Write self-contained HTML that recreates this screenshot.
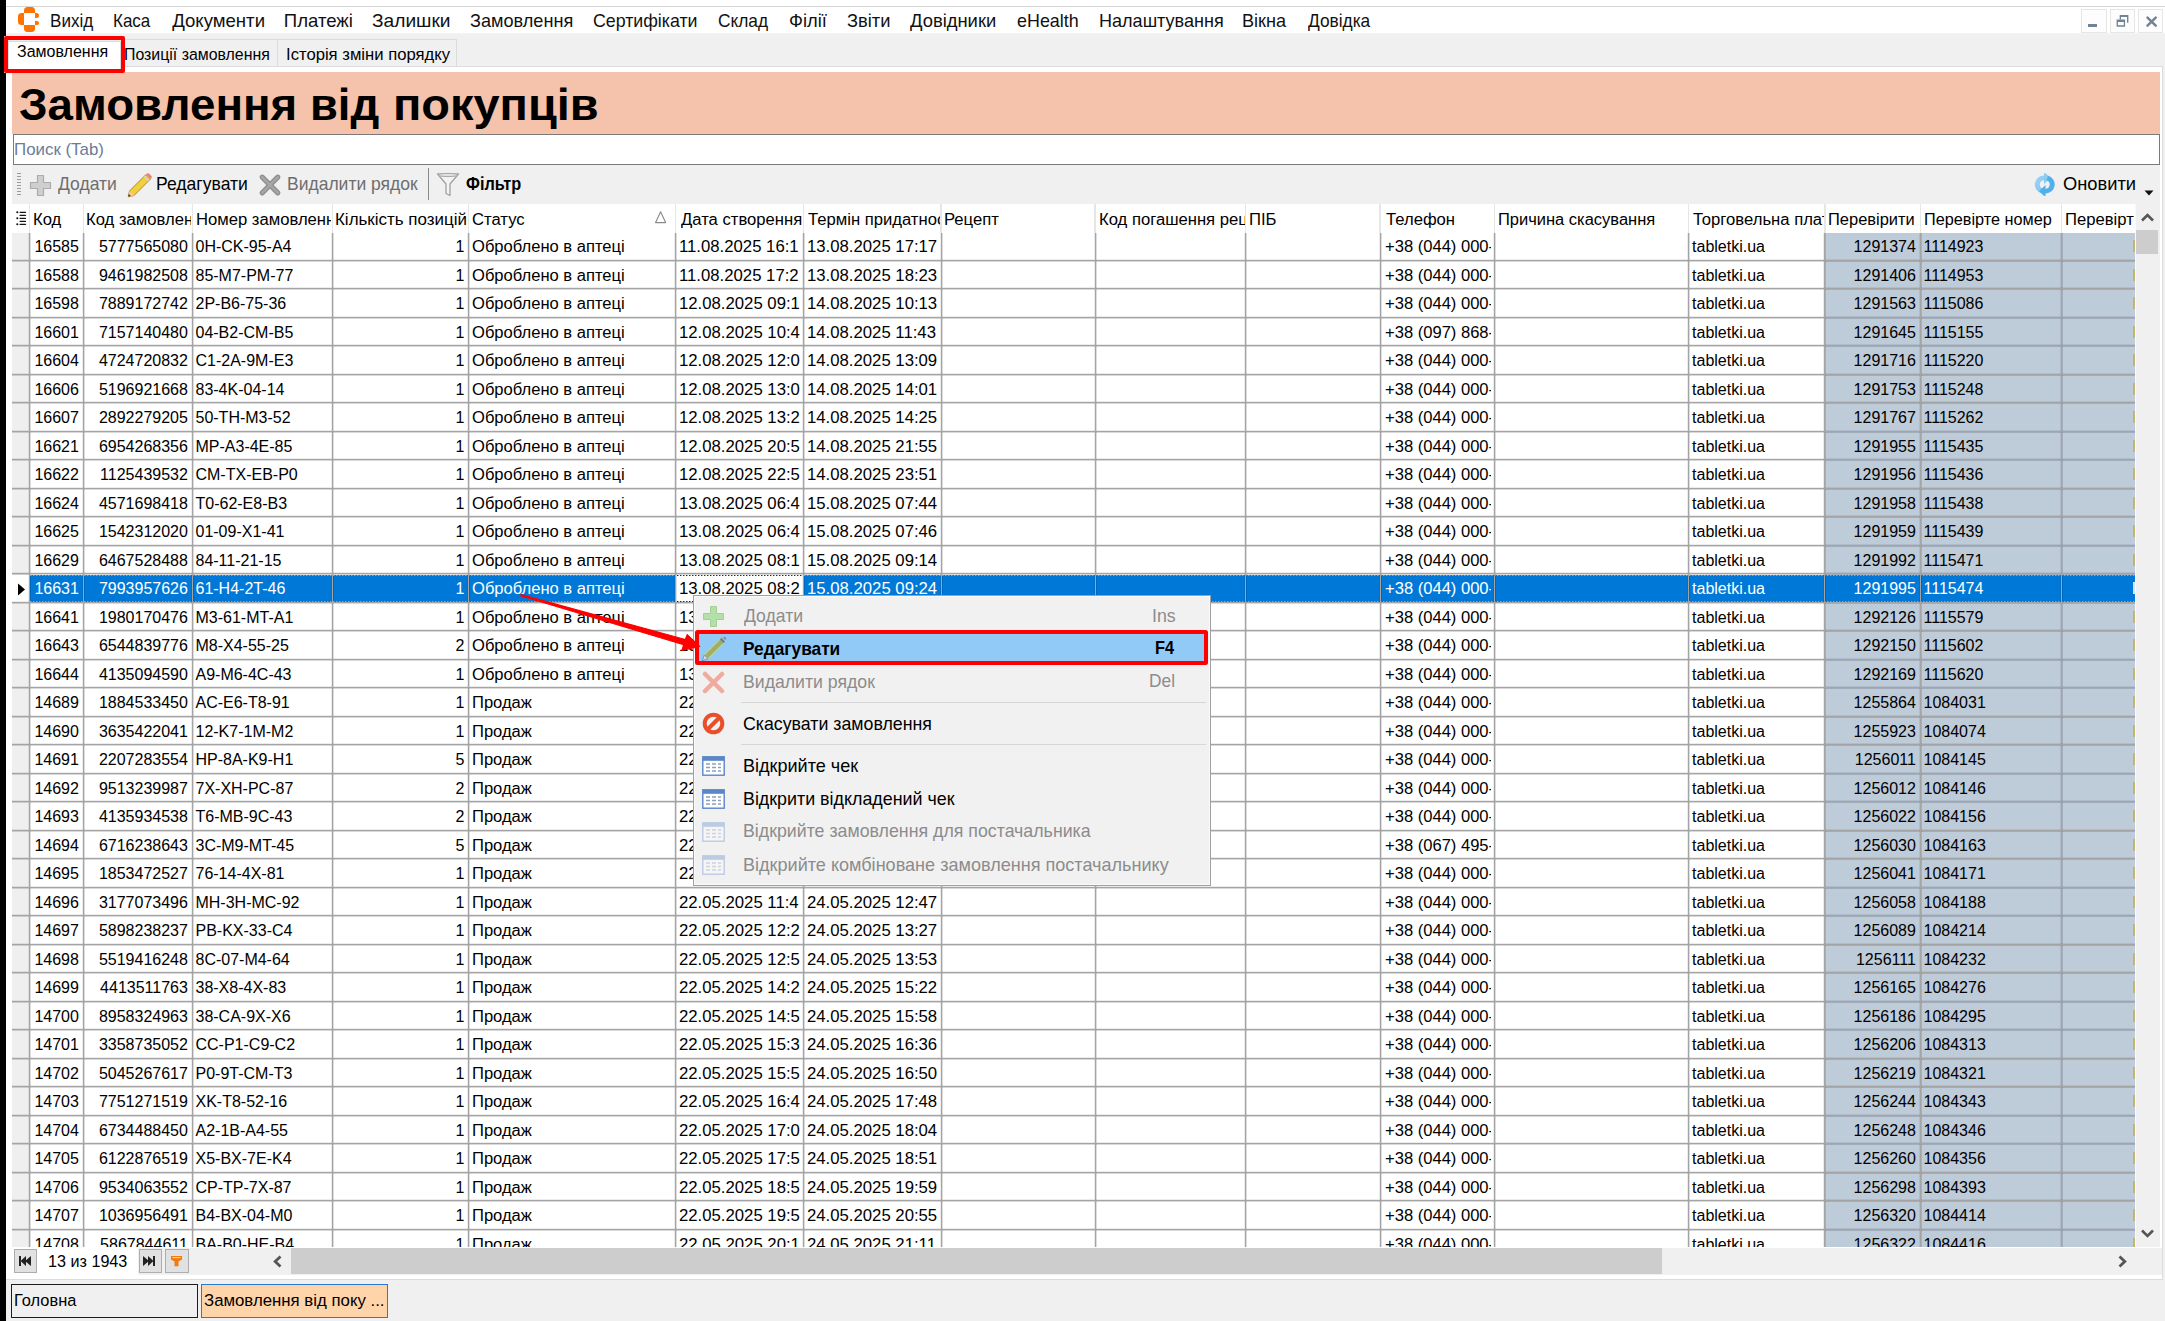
<!DOCTYPE html>
<html><head><meta charset="utf-8"><style>
html,body{margin:0;padding:0;}
body{width:2165px;height:1321px;overflow:hidden;position:relative;background:#f0f0f0;font-family:"Liberation Sans", sans-serif;}
body div, body svg{position:absolute;}
.t{white-space:nowrap;}
</style></head><body>
<div style="left:0;top:0;width:2165px;height:7px;background:#fff"></div>
<div style="left:0.00px;top:6.00px;width:2165.00px;height:1.00px;background:#d6d6d6"></div>
<div style="left:0.00px;top:7.00px;width:2165.00px;height:26.00px;background:#fff"></div>
<div style="left:0.00px;top:33.00px;width:2165.00px;height:2.00px;background:linear-gradient(#f4f4f4,#f0f0f0)"></div>
<div style="left:23.90px;top:7.40px;width:11.50px;height:6.10px;background:#ff7300;border-radius:3.5px 3.5px 0 0"></div>
<div style="left:17.75px;top:13.40px;width:6.25px;height:11.80px;background:#ff7300;border-radius:3.5px 0 0 3.5px"></div>
<div style="left:23.90px;top:25.40px;width:11.50px;height:6.20px;background:#ff7300;border-radius:0 0 3.5px 3.5px"></div>
<div style="left:35.30px;top:13.40px;width:3.80px;height:4.50px;background:#ff7300;border-radius:0 2.5px 2.5px 0"></div>
<div style="left:35.30px;top:21.00px;width:3.80px;height:4.20px;background:#ff7300;border-radius:0 2.5px 2.5px 0"></div>
<div class="t" style="left:50.10px;top:7.84px;height:26.04px;line-height:26.04px;font-size:18.6px;transform:scaleX(0.9177);transform-origin:0 0;color:#111">Вихід</div>
<div class="t" style="left:113.31px;top:7.84px;height:26.04px;line-height:26.04px;font-size:18.6px;transform:scaleX(0.9139);transform-origin:0 0;color:#111">Каса</div>
<div class="t" style="left:172.16px;top:7.84px;height:26.04px;line-height:26.04px;font-size:18.6px;color:#111">Документи</div>
<div class="t" style="left:283.79px;top:7.84px;height:26.04px;line-height:26.04px;font-size:18.6px;color:#111">Платежі</div>
<div class="t" style="left:372.37px;top:7.84px;height:26.04px;line-height:26.04px;font-size:18.6px;transform:scaleX(1.0303);transform-origin:0 0;color:#111">Залишки</div>
<div class="t" style="left:470.01px;top:7.84px;height:26.04px;line-height:26.04px;font-size:18.6px;transform:scaleX(0.9746);transform-origin:0 0;color:#111">Замовлення</div>
<div class="t" style="left:593.40px;top:7.84px;height:26.04px;line-height:26.04px;font-size:18.6px;transform:scaleX(0.9554);transform-origin:0 0;color:#111">Сертифікати</div>
<div class="t" style="left:718.42px;top:7.84px;height:26.04px;line-height:26.04px;font-size:18.6px;transform:scaleX(0.9306);transform-origin:0 0;color:#111">Склад</div>
<div class="t" style="left:788.74px;top:7.84px;height:26.04px;line-height:26.04px;font-size:18.6px;transform:scaleX(0.9849);transform-origin:0 0;color:#111">Філії</div>
<div class="t" style="left:846.90px;top:7.84px;height:26.04px;line-height:26.04px;font-size:18.6px;transform:scaleX(0.9824);transform-origin:0 0;color:#111">Звіти</div>
<div class="t" style="left:910.37px;top:7.84px;height:26.04px;line-height:26.04px;font-size:18.6px;transform:scaleX(0.9889);transform-origin:0 0;color:#111">Довідники</div>
<div class="t" style="left:1016.84px;top:7.84px;height:26.04px;line-height:26.04px;font-size:18.6px;transform:scaleX(0.9631);transform-origin:0 0;color:#111">eHealth</div>
<div class="t" style="left:1098.52px;top:7.84px;height:26.04px;line-height:26.04px;font-size:18.6px;transform:scaleX(0.9706);transform-origin:0 0;color:#111">Налаштування</div>
<div class="t" style="left:1242.21px;top:7.84px;height:26.04px;line-height:26.04px;font-size:18.6px;transform:scaleX(0.9737);transform-origin:0 0;color:#111">Вікна</div>
<div class="t" style="left:1307.77px;top:7.84px;height:26.04px;line-height:26.04px;font-size:18.6px;transform:scaleX(0.9304);transform-origin:0 0;color:#111">Довідка</div>
<div style="left:2081.20px;top:8.70px;width:25.40px;height:24.50px;border:1px solid #e6e6e6;box-sizing:border-box;background:#fdfdfd"></div>
<div style="left:2109.50px;top:8.70px;width:25.80px;height:24.50px;border:1px solid #e6e6e6;box-sizing:border-box;background:#fdfdfd"></div>
<div style="left:2138.40px;top:8.70px;width:24.90px;height:24.50px;border:1px solid #e6e6e6;box-sizing:border-box;background:#fdfdfd"></div>
<div style="left:2088.00px;top:24.10px;width:8.80px;height:2.50px;background:#728396"></div>
<svg style="left:2116px;top:14px" width="14" height="14" viewBox="0 0 14 14"><path d="M3.7 1 H12.4 V8.7 H11 V3 H5 V5.5 H3.7 Z" fill="#728396"/><path d="M0.6 5.5 H9.1 V12.8 H0.6 Z M1.9 8 V11.3 H7.8 V8 Z" fill="#728396" fill-rule="evenodd"/></svg>
<svg style="left:2145px;top:15px" width="13" height="13" viewBox="0 0 13 13"><path d="M2.5 2.6 L10.7 10.6 M10.7 2.6 L2.5 10.6" stroke="#728396" stroke-width="2.5" stroke-linecap="round"/></svg>
<div style="left:6.00px;top:66.20px;width:2157.20px;height:1213.60px;background:#fff;border:1px solid #dcdcdc;border-left:0;box-sizing:border-box"></div>
<div style="left:120.80px;top:39.30px;width:157.50px;height:27.20px;background:#f0f0f0;border:1px solid #dcdcdc;border-bottom:0;box-sizing:border-box"></div>
<div style="left:278.30px;top:39.30px;width:178.50px;height:27.20px;background:#f0f0f0;border:1px solid #dcdcdc;border-bottom:0;border-left:0;box-sizing:border-box"></div>
<div style="left:8.40px;top:40.60px;width:112.40px;height:29.40px;background:#fff;border:1px solid #dcdcdc;border-bottom:0;box-sizing:border-box"></div>
<div class="t" style="left:17.08px;top:39.84px;height:22.82px;line-height:22.82px;font-size:16.3px;transform:scaleX(0.9824);transform-origin:0 0;color:#000">Замовлення</div>
<div class="t" style="left:124.01px;top:42.94px;height:22.82px;line-height:22.82px;font-size:16.3px;transform:scaleX(0.9751);transform-origin:0 0;color:#000">Позиції замовлення</div>
<div class="t" style="left:286.06px;top:42.94px;height:22.82px;line-height:22.82px;font-size:16.3px;transform:scaleX(1.0229);transform-origin:0 0;color:#000">Історія зміни порядку</div>
<div style="left:12.00px;top:72.00px;width:2148.00px;height:61.60px;background:#f5c3ab"></div>
<div class="t" style="left:18.97px;top:73.55px;height:61.6px;line-height:61.6px;font-size:44px;font-weight:bold;transform:scaleX(1.0380);transform-origin:0 0;color:#000">Замовлення</div>
<div class="t" style="left:310.44px;top:73.55px;height:61.6px;line-height:61.6px;font-size:44px;font-weight:bold;transform:scaleX(1.0298);transform-origin:0 0;color:#000">від</div>
<div class="t" style="left:392.72px;top:73.55px;height:61.6px;line-height:61.6px;font-size:44px;font-weight:bold;transform:scaleX(1.0662);transform-origin:0 0;color:#000">покупців</div>
<div style="left:12.60px;top:134.20px;width:2147.60px;height:30.40px;background:#fff;border:1px solid #7a7a7a;box-sizing:border-box"></div>
<div class="t" style="left:14.13px;top:137.51px;height:23.8px;line-height:23.8px;font-size:17px;transform:scaleX(0.9929);transform-origin:0 0;color:#6d7b99">Поиск (Tab)</div>
<div style="left:12.00px;top:165.00px;width:2148.00px;height:38.80px;background:#f0f0f0"></div>
<div style="left:17.00px;top:173.00px;width:4.00px;height:1.00px;background:#9a9a9a"></div>
<div style="left:17.00px;top:176.00px;width:4.00px;height:1.00px;background:#9a9a9a"></div>
<div style="left:17.00px;top:179.00px;width:4.00px;height:1.00px;background:#9a9a9a"></div>
<div style="left:17.00px;top:182.00px;width:4.00px;height:1.00px;background:#9a9a9a"></div>
<div style="left:17.00px;top:185.00px;width:4.00px;height:1.00px;background:#9a9a9a"></div>
<div style="left:17.00px;top:188.00px;width:4.00px;height:1.00px;background:#9a9a9a"></div>
<div style="left:17.00px;top:191.00px;width:4.00px;height:1.00px;background:#9a9a9a"></div>
<div style="left:17.00px;top:194.00px;width:4.00px;height:1.00px;background:#9a9a9a"></div>
<svg style="left:29px;top:173.5px" width="23" height="23" viewBox="0 0 23 23"><path d="M8.5 1.5h6v7h7v6h-7v7h-6v-7h-7v-6h7z" fill="#cfcfcf" stroke="#acacac" stroke-width="1.2" stroke-linejoin="round"/></svg>
<div class="t" style="left:58.37px;top:171.14px;height:26.04px;line-height:26.04px;font-size:18.6px;transform:scaleX(0.9427);transform-origin:0 0;color:#6e6e6e">Додати</div>
<svg style="left:126px;top:171.5px" width="27" height="26" viewBox="0 0 27 26"><path d="M20 2.5 L24.5 7 L8 23.5 L2.2 24.8 L3.5 19 Z" fill="#f2cf3c" stroke="#b08a20" stroke-width="1"/><path d="M18.2 4.3 L22.7 8.8" stroke="#d0d0d0" stroke-width="2"/><path d="M20 2.5 L24.5 7 L25.5 6 C26 5.3 26 4.6 25.5 4 L23 1.5 C22.4 1 21.7 1 21 1.5 Z" fill="#f08080"/><path d="M3.5 19 L8 23.5 L2.2 24.8 Z" fill="#f3c9a8"/><path d="M2.8 22 L4.8 24 L2.2 24.8 Z" fill="#333"/></svg>
<div class="t" style="left:156.36px;top:171.14px;height:26.04px;line-height:26.04px;font-size:18.6px;transform:scaleX(0.9442);transform-origin:0 0;color:#000">Редагувати</div>
<svg style="left:257.5px;top:172.5px" width="24" height="24" viewBox="0 0 24 24"><path d="M4.2 4.2 L19.8 19.8 M19.8 4.2 L4.2 19.8" stroke="#8e8e8e" stroke-width="5.2" stroke-linecap="round"/><path d="M4.2 4.2 L19.8 19.8 M19.8 4.2 L4.2 19.8" stroke="#a6a6a6" stroke-width="2.6" stroke-linecap="round"/></svg>
<div class="t" style="left:286.96px;top:171.14px;height:26.04px;line-height:26.04px;font-size:18.6px;transform:scaleX(0.9412);transform-origin:0 0;color:#6e6e6e">Видалити рядок</div>
<div style="left:427.50px;top:168.00px;width:1.30px;height:32.00px;background:#8a8a8a"></div>
<svg style="left:436px;top:172px" width="24" height="25" viewBox="0 0 24 25"><path d="M1.5 2 H22.5 L14 12 V23.5 L10 21.5 V12 Z" fill="#f4f4f4" stroke="#a0a0a0" stroke-width="1.3" stroke-linejoin="round"/><ellipse cx="12" cy="3" rx="10" ry="1.6" fill="#e0e0e0" stroke="#a8a8a8" stroke-width="1"/></svg>
<div class="t" style="left:466.44px;top:171.14px;height:26.04px;line-height:26.04px;font-size:18.6px;font-weight:bold;transform:scaleX(0.8752);transform-origin:0 0;color:#000">Фільтр</div>
<svg style="left:2033px;top:173px" width="24" height="23" viewBox="0 0 24 23"><defs><linearGradient id="rg" x1="0" y1="0" x2="1" y2="1"><stop offset="0" stop-color="#9ad4f8"/><stop offset="1" stop-color="#5ab4ec"/></linearGradient></defs><path d="M11 2.5 A9 9 0 0 0 8.5 20.2 L9.8 15.6 A4.3 4.3 0 0 1 11 7.2 L11 11 L17.5 4.8 L11 -1.2 Z" fill="url(#rg)" opacity="0.85"/><path d="M12.5 20.5 A9 9 0 0 0 15 2.8 L13.7 7.4 A4.3 4.3 0 0 1 12.5 15.8 L12.5 12 L6 18.2 L12.5 24.2 Z" fill="#4fb0ee"/></svg>
<div class="t" style="left:2062.53px;top:171.14px;height:26.04px;line-height:26.04px;font-size:18.6px;transform:scaleX(0.9838);transform-origin:0 0;color:#000">Оновити</div>
<svg style="left:2144px;top:190px" width="10" height="6" viewBox="0 0 10 6"><path d="M0.5 0.5 H9.5 L5 5.5Z" fill="#111"/></svg>
<div style="left:12.00px;top:204.00px;width:2122.70px;height:28.60px;background:#fff"></div>
<div style="left:30.30px;top:204.00px;width:52.10px;height:28.60px;overflow:hidden"><div class="t" style="left:2.33px;top:5.36px;height:22.4px;line-height:22.4px;font-size:16px;transform:scaleX(1.0400);transform-origin:0 0;color:#000">Код</div></div>
<div style="left:84.00px;top:204.00px;width:107.40px;height:28.60px;overflow:hidden"><div class="t" style="left:1.94px;top:5.36px;height:22.4px;line-height:22.4px;font-size:16px;transform:scaleX(1.0400);transform-origin:0 0;color:#000">Код замовлення</div></div>
<div style="left:193.00px;top:204.00px;width:138.40px;height:28.60px;overflow:hidden"><div class="t" style="left:2.63px;top:5.36px;height:22.4px;line-height:22.4px;font-size:16px;transform:scaleX(1.0400);transform-origin:0 0;color:#000">Номер замовлення</div></div>
<div style="left:333.00px;top:204.00px;width:134.90px;height:28.60px;overflow:hidden"><div class="t" style="left:2.31px;top:5.36px;height:22.4px;line-height:22.4px;font-size:16px;transform:scaleX(1.0590);transform-origin:0 0;color:#000">Кількість позицій</div></div>
<div style="left:469.50px;top:204.00px;width:205.50px;height:28.60px;overflow:hidden"><div class="t" style="left:2.65px;top:5.36px;height:22.4px;line-height:22.4px;font-size:16px;transform:scaleX(1.0400);transform-origin:0 0;color:#000">Статус</div></div>
<div style="left:676.60px;top:204.00px;width:126.10px;height:28.60px;overflow:hidden"><div class="t" style="left:4.08px;top:5.36px;height:22.4px;line-height:22.4px;font-size:16px;transform:scaleX(1.0400);transform-origin:0 0;color:#000">Дата створення</div></div>
<div style="left:804.30px;top:204.00px;width:135.90px;height:28.60px;overflow:hidden"><div class="t" style="left:3.33px;top:5.36px;height:22.4px;line-height:22.4px;font-size:16px;transform:scaleX(1.0400);transform-origin:0 0;color:#000">Термін придатності</div></div>
<div style="left:941.80px;top:204.00px;width:152.40px;height:28.60px;overflow:hidden"><div class="t" style="left:2.34px;top:5.36px;height:22.4px;line-height:22.4px;font-size:16px;transform:scaleX(1.0400);transform-origin:0 0;color:#000">Рецепт</div></div>
<div style="left:1095.80px;top:204.00px;width:149.00px;height:28.60px;overflow:hidden"><div class="t" style="left:2.84px;top:5.36px;height:22.4px;line-height:22.4px;font-size:16px;transform:scaleX(1.0400);transform-origin:0 0;color:#000">Код погашення рецепту</div></div>
<div style="left:1246.40px;top:204.00px;width:132.80px;height:28.60px;overflow:hidden"><div class="t" style="left:2.75px;top:5.36px;height:22.4px;line-height:22.4px;font-size:16px;transform:scaleX(1.0400);transform-origin:0 0;color:#000">ПІБ</div></div>
<div style="left:1380.80px;top:204.00px;width:112.90px;height:28.60px;overflow:hidden"><div class="t" style="left:5.03px;top:5.36px;height:22.4px;line-height:22.4px;font-size:16px;transform:scaleX(1.0400);transform-origin:0 0;color:#000">Телефон</div></div>
<div style="left:1495.30px;top:204.00px;width:192.65px;height:28.60px;overflow:hidden"><div class="t" style="left:3.06px;top:5.36px;height:22.4px;line-height:22.4px;font-size:16px;transform:scaleX(1.0300);transform-origin:0 0;color:#000">Причина скасування</div></div>
<div style="left:1689.55px;top:204.00px;width:134.55px;height:28.60px;overflow:hidden"><div class="t" style="left:3.08px;top:5.36px;height:22.4px;line-height:22.4px;font-size:16px;transform:scaleX(1.0400);transform-origin:0 0;color:#000">Торговельна платформа</div></div>
<div style="left:1825.70px;top:204.00px;width:93.70px;height:28.60px;overflow:hidden"><div class="t" style="left:2.47px;top:5.36px;height:22.4px;line-height:22.4px;font-size:16px;transform:scaleX(1.0287);transform-origin:0 0;color:#000">Перевірити</div></div>
<div style="left:1921.00px;top:204.00px;width:139.60px;height:28.60px;overflow:hidden"><div class="t" style="left:3.28px;top:5.36px;height:22.4px;line-height:22.4px;font-size:16px;transform:scaleX(1.0149);transform-origin:0 0;color:#000">Перевірте номер</div></div>
<div style="left:2062.20px;top:204.00px;width:71.70px;height:28.60px;overflow:hidden"><div class="t" style="left:2.85px;top:5.36px;height:22.4px;line-height:22.4px;font-size:16px;transform:scaleX(1.0400);transform-origin:0 0;color:#000">Перевірте номер</div></div>
<div style="left:28.80px;top:204.00px;width:1.40px;height:28.60px;background:#e6e6e6"></div>
<div style="left:82.50px;top:204.00px;width:1.40px;height:28.60px;background:#e6e6e6"></div>
<div style="left:191.50px;top:204.00px;width:1.40px;height:28.60px;background:#e6e6e6"></div>
<div style="left:331.50px;top:204.00px;width:1.40px;height:28.60px;background:#e6e6e6"></div>
<div style="left:468.00px;top:204.00px;width:1.40px;height:28.60px;background:#e6e6e6"></div>
<div style="left:675.10px;top:204.00px;width:1.40px;height:28.60px;background:#e6e6e6"></div>
<div style="left:802.80px;top:204.00px;width:1.40px;height:28.60px;background:#e6e6e6"></div>
<div style="left:940.30px;top:204.00px;width:1.40px;height:28.60px;background:#e6e6e6"></div>
<div style="left:1094.30px;top:204.00px;width:1.40px;height:28.60px;background:#e6e6e6"></div>
<div style="left:1244.90px;top:204.00px;width:1.40px;height:28.60px;background:#e6e6e6"></div>
<div style="left:1379.30px;top:204.00px;width:1.40px;height:28.60px;background:#e6e6e6"></div>
<div style="left:1493.80px;top:204.00px;width:1.40px;height:28.60px;background:#e6e6e6"></div>
<div style="left:1688.05px;top:204.00px;width:1.40px;height:28.60px;background:#e6e6e6"></div>
<div style="left:1824.20px;top:204.00px;width:1.40px;height:28.60px;background:#e6e6e6"></div>
<div style="left:1919.50px;top:204.00px;width:1.40px;height:28.60px;background:#e6e6e6"></div>
<div style="left:2060.70px;top:204.00px;width:1.40px;height:28.60px;background:#e6e6e6"></div>
<svg style="left:654px;top:210px" width="13" height="14" viewBox="0 0 13 14"><path d="M6.6 1.8 L11.6 12.6 H1.6 Z" fill="none" stroke="#8a8a8a" stroke-width="1.1" stroke-linejoin="round"/></svg>
<svg style="left:14px;top:209px" width="14" height="18" viewBox="0 0 14 18"><g fill="#111"><circle cx="3.3" cy="3.3" r="1.05"/><circle cx="3.3" cy="9.3" r="1.05"/><circle cx="3.3" cy="15.3" r="1.05"/></g><g stroke="#151515" stroke-width="1.35" stroke-linecap="round"><path d="M6.1 3.3H11.5M6.1 6.3H11.5M6.1 9.3H11.5M6.1 12.3H11.5M6.1 15.3H11.5"/></g></svg>
<div style="left:12px;top:232.60px;width:2122.70px;height:1014.40px;overflow:hidden">
<div style="left:0.00px;top:0.00px;width:17.50px;height:1014.40px;background:#efefef"></div>
<div style="left:1812.90px;top:0.00px;width:309.80px;height:1014.40px;background:#becbd9"></div>
<div class="t" style="left:17.50px;top:1.65px;width:53.70px;height:26px;line-height:26px;font-size:16px;text-align:right;overflow:hidden;padding-right:4.3px;box-sizing:border-box;color:#000">16585</div>
<div class="t" style="left:71.20px;top:1.65px;width:109.00px;height:26px;line-height:26px;font-size:16px;text-align:right;overflow:hidden;padding-right:4.3px;box-sizing:border-box;color:#000">5777565080</div>
<div class="t" style="left:180.20px;top:1.65px;width:140.00px;height:26px;line-height:26px;font-size:16px;text-align:left;overflow:hidden;padding-left:3.3px;box-sizing:border-box;color:#000">0H-CK-95-A4</div>
<div class="t" style="left:320.20px;top:1.65px;width:136.50px;height:26px;line-height:26px;font-size:16px;text-align:right;overflow:hidden;padding-right:4.3px;box-sizing:border-box;color:#000">1</div>
<div style="left:456.70px;top:1.65px;width:206.50px;height:26px;overflow:hidden"><div class="t" style="left:3.3px;top:0;height:26px;line-height:26px;font-size:16px;transform:scaleX(1.035);transform-origin:0 0;color:#000">Оброблено в аптеці</div></div>
<div style="left:663.80px;top:1.65px;width:127.10px;height:26px;overflow:hidden"><div class="t" style="left:3.3px;top:0;height:26px;line-height:26px;font-size:16px;transform:scaleX(1.045);transform-origin:0 0;color:#000">11.08.2025 16:1</div></div>
<div style="left:791.50px;top:1.65px;width:136.90px;height:26px;overflow:hidden"><div class="t" style="left:3.3px;top:0;height:26px;line-height:26px;font-size:16px;transform:scaleX(1.045);transform-origin:0 0;color:#000">13.08.2025 17:17</div></div>
<div style="left:1368.00px;top:1.65px;width:110.60px;height:26px;overflow:hidden"><div class="t" style="left:4.6px;top:0;height:26px;line-height:26px;font-size:16px;transform:scaleX(1.035);transform-origin:0 0;color:#000">+38 (044) 000-00-00</div></div>
<div class="t" style="left:1676.75px;top:1.65px;width:136.15px;height:26px;line-height:26px;font-size:16px;text-align:left;overflow:hidden;padding-left:3.3px;box-sizing:border-box;color:#000">tabletki.ua</div>
<div class="t" style="left:1812.90px;top:1.65px;width:95.30px;height:26px;line-height:26px;font-size:16px;text-align:right;overflow:hidden;padding-right:4.3px;box-sizing:border-box;color:#000">1291374</div>
<div class="t" style="left:1908.20px;top:1.65px;width:141.20px;height:26px;line-height:26px;font-size:16px;text-align:left;overflow:hidden;padding-left:3.3px;box-sizing:border-box;color:#000">1114923</div>
<div style="left:2121.00px;top:7.50px;width:1.50px;height:12.00px;background:#c4b474"></div>
<div class="t" style="left:17.50px;top:30.15px;width:53.70px;height:26px;line-height:26px;font-size:16px;text-align:right;overflow:hidden;padding-right:4.3px;box-sizing:border-box;color:#000">16588</div>
<div class="t" style="left:71.20px;top:30.15px;width:109.00px;height:26px;line-height:26px;font-size:16px;text-align:right;overflow:hidden;padding-right:4.3px;box-sizing:border-box;color:#000">9461982508</div>
<div class="t" style="left:180.20px;top:30.15px;width:140.00px;height:26px;line-height:26px;font-size:16px;text-align:left;overflow:hidden;padding-left:3.3px;box-sizing:border-box;color:#000">85-M7-PM-77</div>
<div class="t" style="left:320.20px;top:30.15px;width:136.50px;height:26px;line-height:26px;font-size:16px;text-align:right;overflow:hidden;padding-right:4.3px;box-sizing:border-box;color:#000">1</div>
<div style="left:456.70px;top:30.15px;width:206.50px;height:26px;overflow:hidden"><div class="t" style="left:3.3px;top:0;height:26px;line-height:26px;font-size:16px;transform:scaleX(1.035);transform-origin:0 0;color:#000">Оброблено в аптеці</div></div>
<div style="left:663.80px;top:30.15px;width:127.10px;height:26px;overflow:hidden"><div class="t" style="left:3.3px;top:0;height:26px;line-height:26px;font-size:16px;transform:scaleX(1.045);transform-origin:0 0;color:#000">11.08.2025 17:2</div></div>
<div style="left:791.50px;top:30.15px;width:136.90px;height:26px;overflow:hidden"><div class="t" style="left:3.3px;top:0;height:26px;line-height:26px;font-size:16px;transform:scaleX(1.045);transform-origin:0 0;color:#000">13.08.2025 18:23</div></div>
<div style="left:1368.00px;top:30.15px;width:110.60px;height:26px;overflow:hidden"><div class="t" style="left:4.6px;top:0;height:26px;line-height:26px;font-size:16px;transform:scaleX(1.035);transform-origin:0 0;color:#000">+38 (044) 000-00-00</div></div>
<div class="t" style="left:1676.75px;top:30.15px;width:136.15px;height:26px;line-height:26px;font-size:16px;text-align:left;overflow:hidden;padding-left:3.3px;box-sizing:border-box;color:#000">tabletki.ua</div>
<div class="t" style="left:1812.90px;top:30.15px;width:95.30px;height:26px;line-height:26px;font-size:16px;text-align:right;overflow:hidden;padding-right:4.3px;box-sizing:border-box;color:#000">1291406</div>
<div class="t" style="left:1908.20px;top:30.15px;width:141.20px;height:26px;line-height:26px;font-size:16px;text-align:left;overflow:hidden;padding-left:3.3px;box-sizing:border-box;color:#000">1114953</div>
<div style="left:2121.00px;top:36.00px;width:1.50px;height:12.00px;background:#c4b474"></div>
<div class="t" style="left:17.50px;top:58.65px;width:53.70px;height:26px;line-height:26px;font-size:16px;text-align:right;overflow:hidden;padding-right:4.3px;box-sizing:border-box;color:#000">16598</div>
<div class="t" style="left:71.20px;top:58.65px;width:109.00px;height:26px;line-height:26px;font-size:16px;text-align:right;overflow:hidden;padding-right:4.3px;box-sizing:border-box;color:#000">7889172742</div>
<div class="t" style="left:180.20px;top:58.65px;width:140.00px;height:26px;line-height:26px;font-size:16px;text-align:left;overflow:hidden;padding-left:3.3px;box-sizing:border-box;color:#000">2P-B6-75-36</div>
<div class="t" style="left:320.20px;top:58.65px;width:136.50px;height:26px;line-height:26px;font-size:16px;text-align:right;overflow:hidden;padding-right:4.3px;box-sizing:border-box;color:#000">1</div>
<div style="left:456.70px;top:58.65px;width:206.50px;height:26px;overflow:hidden"><div class="t" style="left:3.3px;top:0;height:26px;line-height:26px;font-size:16px;transform:scaleX(1.035);transform-origin:0 0;color:#000">Оброблено в аптеці</div></div>
<div style="left:663.80px;top:58.65px;width:127.10px;height:26px;overflow:hidden"><div class="t" style="left:3.3px;top:0;height:26px;line-height:26px;font-size:16px;transform:scaleX(1.045);transform-origin:0 0;color:#000">12.08.2025 09:1</div></div>
<div style="left:791.50px;top:58.65px;width:136.90px;height:26px;overflow:hidden"><div class="t" style="left:3.3px;top:0;height:26px;line-height:26px;font-size:16px;transform:scaleX(1.045);transform-origin:0 0;color:#000">14.08.2025 10:13</div></div>
<div style="left:1368.00px;top:58.65px;width:110.60px;height:26px;overflow:hidden"><div class="t" style="left:4.6px;top:0;height:26px;line-height:26px;font-size:16px;transform:scaleX(1.035);transform-origin:0 0;color:#000">+38 (044) 000-00-00</div></div>
<div class="t" style="left:1676.75px;top:58.65px;width:136.15px;height:26px;line-height:26px;font-size:16px;text-align:left;overflow:hidden;padding-left:3.3px;box-sizing:border-box;color:#000">tabletki.ua</div>
<div class="t" style="left:1812.90px;top:58.65px;width:95.30px;height:26px;line-height:26px;font-size:16px;text-align:right;overflow:hidden;padding-right:4.3px;box-sizing:border-box;color:#000">1291563</div>
<div class="t" style="left:1908.20px;top:58.65px;width:141.20px;height:26px;line-height:26px;font-size:16px;text-align:left;overflow:hidden;padding-left:3.3px;box-sizing:border-box;color:#000">1115086</div>
<div style="left:2121.00px;top:64.50px;width:1.50px;height:12.00px;background:#c4b474"></div>
<div class="t" style="left:17.50px;top:87.15px;width:53.70px;height:26px;line-height:26px;font-size:16px;text-align:right;overflow:hidden;padding-right:4.3px;box-sizing:border-box;color:#000">16601</div>
<div class="t" style="left:71.20px;top:87.15px;width:109.00px;height:26px;line-height:26px;font-size:16px;text-align:right;overflow:hidden;padding-right:4.3px;box-sizing:border-box;color:#000">7157140480</div>
<div class="t" style="left:180.20px;top:87.15px;width:140.00px;height:26px;line-height:26px;font-size:16px;text-align:left;overflow:hidden;padding-left:3.3px;box-sizing:border-box;color:#000">04-B2-CM-B5</div>
<div class="t" style="left:320.20px;top:87.15px;width:136.50px;height:26px;line-height:26px;font-size:16px;text-align:right;overflow:hidden;padding-right:4.3px;box-sizing:border-box;color:#000">1</div>
<div style="left:456.70px;top:87.15px;width:206.50px;height:26px;overflow:hidden"><div class="t" style="left:3.3px;top:0;height:26px;line-height:26px;font-size:16px;transform:scaleX(1.035);transform-origin:0 0;color:#000">Оброблено в аптеці</div></div>
<div style="left:663.80px;top:87.15px;width:127.10px;height:26px;overflow:hidden"><div class="t" style="left:3.3px;top:0;height:26px;line-height:26px;font-size:16px;transform:scaleX(1.045);transform-origin:0 0;color:#000">12.08.2025 10:4</div></div>
<div style="left:791.50px;top:87.15px;width:136.90px;height:26px;overflow:hidden"><div class="t" style="left:3.3px;top:0;height:26px;line-height:26px;font-size:16px;transform:scaleX(1.045);transform-origin:0 0;color:#000">14.08.2025 11:43</div></div>
<div style="left:1368.00px;top:87.15px;width:110.60px;height:26px;overflow:hidden"><div class="t" style="left:4.6px;top:0;height:26px;line-height:26px;font-size:16px;transform:scaleX(1.035);transform-origin:0 0;color:#000">+38 (097) 868-00-00</div></div>
<div class="t" style="left:1676.75px;top:87.15px;width:136.15px;height:26px;line-height:26px;font-size:16px;text-align:left;overflow:hidden;padding-left:3.3px;box-sizing:border-box;color:#000">tabletki.ua</div>
<div class="t" style="left:1812.90px;top:87.15px;width:95.30px;height:26px;line-height:26px;font-size:16px;text-align:right;overflow:hidden;padding-right:4.3px;box-sizing:border-box;color:#000">1291645</div>
<div class="t" style="left:1908.20px;top:87.15px;width:141.20px;height:26px;line-height:26px;font-size:16px;text-align:left;overflow:hidden;padding-left:3.3px;box-sizing:border-box;color:#000">1115155</div>
<div style="left:2121.00px;top:93.00px;width:1.50px;height:12.00px;background:#c4b474"></div>
<div class="t" style="left:17.50px;top:115.65px;width:53.70px;height:26px;line-height:26px;font-size:16px;text-align:right;overflow:hidden;padding-right:4.3px;box-sizing:border-box;color:#000">16604</div>
<div class="t" style="left:71.20px;top:115.65px;width:109.00px;height:26px;line-height:26px;font-size:16px;text-align:right;overflow:hidden;padding-right:4.3px;box-sizing:border-box;color:#000">4724720832</div>
<div class="t" style="left:180.20px;top:115.65px;width:140.00px;height:26px;line-height:26px;font-size:16px;text-align:left;overflow:hidden;padding-left:3.3px;box-sizing:border-box;color:#000">C1-2A-9M-E3</div>
<div class="t" style="left:320.20px;top:115.65px;width:136.50px;height:26px;line-height:26px;font-size:16px;text-align:right;overflow:hidden;padding-right:4.3px;box-sizing:border-box;color:#000">1</div>
<div style="left:456.70px;top:115.65px;width:206.50px;height:26px;overflow:hidden"><div class="t" style="left:3.3px;top:0;height:26px;line-height:26px;font-size:16px;transform:scaleX(1.035);transform-origin:0 0;color:#000">Оброблено в аптеці</div></div>
<div style="left:663.80px;top:115.65px;width:127.10px;height:26px;overflow:hidden"><div class="t" style="left:3.3px;top:0;height:26px;line-height:26px;font-size:16px;transform:scaleX(1.045);transform-origin:0 0;color:#000">12.08.2025 12:0</div></div>
<div style="left:791.50px;top:115.65px;width:136.90px;height:26px;overflow:hidden"><div class="t" style="left:3.3px;top:0;height:26px;line-height:26px;font-size:16px;transform:scaleX(1.045);transform-origin:0 0;color:#000">14.08.2025 13:09</div></div>
<div style="left:1368.00px;top:115.65px;width:110.60px;height:26px;overflow:hidden"><div class="t" style="left:4.6px;top:0;height:26px;line-height:26px;font-size:16px;transform:scaleX(1.035);transform-origin:0 0;color:#000">+38 (044) 000-00-00</div></div>
<div class="t" style="left:1676.75px;top:115.65px;width:136.15px;height:26px;line-height:26px;font-size:16px;text-align:left;overflow:hidden;padding-left:3.3px;box-sizing:border-box;color:#000">tabletki.ua</div>
<div class="t" style="left:1812.90px;top:115.65px;width:95.30px;height:26px;line-height:26px;font-size:16px;text-align:right;overflow:hidden;padding-right:4.3px;box-sizing:border-box;color:#000">1291716</div>
<div class="t" style="left:1908.20px;top:115.65px;width:141.20px;height:26px;line-height:26px;font-size:16px;text-align:left;overflow:hidden;padding-left:3.3px;box-sizing:border-box;color:#000">1115220</div>
<div style="left:2121.00px;top:121.50px;width:1.50px;height:12.00px;background:#c4b474"></div>
<div class="t" style="left:17.50px;top:144.15px;width:53.70px;height:26px;line-height:26px;font-size:16px;text-align:right;overflow:hidden;padding-right:4.3px;box-sizing:border-box;color:#000">16606</div>
<div class="t" style="left:71.20px;top:144.15px;width:109.00px;height:26px;line-height:26px;font-size:16px;text-align:right;overflow:hidden;padding-right:4.3px;box-sizing:border-box;color:#000">5196921668</div>
<div class="t" style="left:180.20px;top:144.15px;width:140.00px;height:26px;line-height:26px;font-size:16px;text-align:left;overflow:hidden;padding-left:3.3px;box-sizing:border-box;color:#000">83-4K-04-14</div>
<div class="t" style="left:320.20px;top:144.15px;width:136.50px;height:26px;line-height:26px;font-size:16px;text-align:right;overflow:hidden;padding-right:4.3px;box-sizing:border-box;color:#000">1</div>
<div style="left:456.70px;top:144.15px;width:206.50px;height:26px;overflow:hidden"><div class="t" style="left:3.3px;top:0;height:26px;line-height:26px;font-size:16px;transform:scaleX(1.035);transform-origin:0 0;color:#000">Оброблено в аптеці</div></div>
<div style="left:663.80px;top:144.15px;width:127.10px;height:26px;overflow:hidden"><div class="t" style="left:3.3px;top:0;height:26px;line-height:26px;font-size:16px;transform:scaleX(1.045);transform-origin:0 0;color:#000">12.08.2025 13:0</div></div>
<div style="left:791.50px;top:144.15px;width:136.90px;height:26px;overflow:hidden"><div class="t" style="left:3.3px;top:0;height:26px;line-height:26px;font-size:16px;transform:scaleX(1.045);transform-origin:0 0;color:#000">14.08.2025 14:01</div></div>
<div style="left:1368.00px;top:144.15px;width:110.60px;height:26px;overflow:hidden"><div class="t" style="left:4.6px;top:0;height:26px;line-height:26px;font-size:16px;transform:scaleX(1.035);transform-origin:0 0;color:#000">+38 (044) 000-00-00</div></div>
<div class="t" style="left:1676.75px;top:144.15px;width:136.15px;height:26px;line-height:26px;font-size:16px;text-align:left;overflow:hidden;padding-left:3.3px;box-sizing:border-box;color:#000">tabletki.ua</div>
<div class="t" style="left:1812.90px;top:144.15px;width:95.30px;height:26px;line-height:26px;font-size:16px;text-align:right;overflow:hidden;padding-right:4.3px;box-sizing:border-box;color:#000">1291753</div>
<div class="t" style="left:1908.20px;top:144.15px;width:141.20px;height:26px;line-height:26px;font-size:16px;text-align:left;overflow:hidden;padding-left:3.3px;box-sizing:border-box;color:#000">1115248</div>
<div style="left:2121.00px;top:150.00px;width:1.50px;height:12.00px;background:#c4b474"></div>
<div class="t" style="left:17.50px;top:172.65px;width:53.70px;height:26px;line-height:26px;font-size:16px;text-align:right;overflow:hidden;padding-right:4.3px;box-sizing:border-box;color:#000">16607</div>
<div class="t" style="left:71.20px;top:172.65px;width:109.00px;height:26px;line-height:26px;font-size:16px;text-align:right;overflow:hidden;padding-right:4.3px;box-sizing:border-box;color:#000">2892279205</div>
<div class="t" style="left:180.20px;top:172.65px;width:140.00px;height:26px;line-height:26px;font-size:16px;text-align:left;overflow:hidden;padding-left:3.3px;box-sizing:border-box;color:#000">50-TH-M3-52</div>
<div class="t" style="left:320.20px;top:172.65px;width:136.50px;height:26px;line-height:26px;font-size:16px;text-align:right;overflow:hidden;padding-right:4.3px;box-sizing:border-box;color:#000">1</div>
<div style="left:456.70px;top:172.65px;width:206.50px;height:26px;overflow:hidden"><div class="t" style="left:3.3px;top:0;height:26px;line-height:26px;font-size:16px;transform:scaleX(1.035);transform-origin:0 0;color:#000">Оброблено в аптеці</div></div>
<div style="left:663.80px;top:172.65px;width:127.10px;height:26px;overflow:hidden"><div class="t" style="left:3.3px;top:0;height:26px;line-height:26px;font-size:16px;transform:scaleX(1.045);transform-origin:0 0;color:#000">12.08.2025 13:2</div></div>
<div style="left:791.50px;top:172.65px;width:136.90px;height:26px;overflow:hidden"><div class="t" style="left:3.3px;top:0;height:26px;line-height:26px;font-size:16px;transform:scaleX(1.045);transform-origin:0 0;color:#000">14.08.2025 14:25</div></div>
<div style="left:1368.00px;top:172.65px;width:110.60px;height:26px;overflow:hidden"><div class="t" style="left:4.6px;top:0;height:26px;line-height:26px;font-size:16px;transform:scaleX(1.035);transform-origin:0 0;color:#000">+38 (044) 000-00-00</div></div>
<div class="t" style="left:1676.75px;top:172.65px;width:136.15px;height:26px;line-height:26px;font-size:16px;text-align:left;overflow:hidden;padding-left:3.3px;box-sizing:border-box;color:#000">tabletki.ua</div>
<div class="t" style="left:1812.90px;top:172.65px;width:95.30px;height:26px;line-height:26px;font-size:16px;text-align:right;overflow:hidden;padding-right:4.3px;box-sizing:border-box;color:#000">1291767</div>
<div class="t" style="left:1908.20px;top:172.65px;width:141.20px;height:26px;line-height:26px;font-size:16px;text-align:left;overflow:hidden;padding-left:3.3px;box-sizing:border-box;color:#000">1115262</div>
<div style="left:2121.00px;top:178.50px;width:1.50px;height:12.00px;background:#c4b474"></div>
<div class="t" style="left:17.50px;top:201.15px;width:53.70px;height:26px;line-height:26px;font-size:16px;text-align:right;overflow:hidden;padding-right:4.3px;box-sizing:border-box;color:#000">16621</div>
<div class="t" style="left:71.20px;top:201.15px;width:109.00px;height:26px;line-height:26px;font-size:16px;text-align:right;overflow:hidden;padding-right:4.3px;box-sizing:border-box;color:#000">6954268356</div>
<div class="t" style="left:180.20px;top:201.15px;width:140.00px;height:26px;line-height:26px;font-size:16px;text-align:left;overflow:hidden;padding-left:3.3px;box-sizing:border-box;color:#000">MP-A3-4E-85</div>
<div class="t" style="left:320.20px;top:201.15px;width:136.50px;height:26px;line-height:26px;font-size:16px;text-align:right;overflow:hidden;padding-right:4.3px;box-sizing:border-box;color:#000">1</div>
<div style="left:456.70px;top:201.15px;width:206.50px;height:26px;overflow:hidden"><div class="t" style="left:3.3px;top:0;height:26px;line-height:26px;font-size:16px;transform:scaleX(1.035);transform-origin:0 0;color:#000">Оброблено в аптеці</div></div>
<div style="left:663.80px;top:201.15px;width:127.10px;height:26px;overflow:hidden"><div class="t" style="left:3.3px;top:0;height:26px;line-height:26px;font-size:16px;transform:scaleX(1.045);transform-origin:0 0;color:#000">12.08.2025 20:5</div></div>
<div style="left:791.50px;top:201.15px;width:136.90px;height:26px;overflow:hidden"><div class="t" style="left:3.3px;top:0;height:26px;line-height:26px;font-size:16px;transform:scaleX(1.045);transform-origin:0 0;color:#000">14.08.2025 21:55</div></div>
<div style="left:1368.00px;top:201.15px;width:110.60px;height:26px;overflow:hidden"><div class="t" style="left:4.6px;top:0;height:26px;line-height:26px;font-size:16px;transform:scaleX(1.035);transform-origin:0 0;color:#000">+38 (044) 000-00-00</div></div>
<div class="t" style="left:1676.75px;top:201.15px;width:136.15px;height:26px;line-height:26px;font-size:16px;text-align:left;overflow:hidden;padding-left:3.3px;box-sizing:border-box;color:#000">tabletki.ua</div>
<div class="t" style="left:1812.90px;top:201.15px;width:95.30px;height:26px;line-height:26px;font-size:16px;text-align:right;overflow:hidden;padding-right:4.3px;box-sizing:border-box;color:#000">1291955</div>
<div class="t" style="left:1908.20px;top:201.15px;width:141.20px;height:26px;line-height:26px;font-size:16px;text-align:left;overflow:hidden;padding-left:3.3px;box-sizing:border-box;color:#000">1115435</div>
<div style="left:2121.00px;top:207.00px;width:1.50px;height:12.00px;background:#c4b474"></div>
<div class="t" style="left:17.50px;top:229.65px;width:53.70px;height:26px;line-height:26px;font-size:16px;text-align:right;overflow:hidden;padding-right:4.3px;box-sizing:border-box;color:#000">16622</div>
<div class="t" style="left:71.20px;top:229.65px;width:109.00px;height:26px;line-height:26px;font-size:16px;text-align:right;overflow:hidden;padding-right:4.3px;box-sizing:border-box;color:#000">1125439532</div>
<div class="t" style="left:180.20px;top:229.65px;width:140.00px;height:26px;line-height:26px;font-size:16px;text-align:left;overflow:hidden;padding-left:3.3px;box-sizing:border-box;color:#000">CM-TX-EB-P0</div>
<div class="t" style="left:320.20px;top:229.65px;width:136.50px;height:26px;line-height:26px;font-size:16px;text-align:right;overflow:hidden;padding-right:4.3px;box-sizing:border-box;color:#000">1</div>
<div style="left:456.70px;top:229.65px;width:206.50px;height:26px;overflow:hidden"><div class="t" style="left:3.3px;top:0;height:26px;line-height:26px;font-size:16px;transform:scaleX(1.035);transform-origin:0 0;color:#000">Оброблено в аптеці</div></div>
<div style="left:663.80px;top:229.65px;width:127.10px;height:26px;overflow:hidden"><div class="t" style="left:3.3px;top:0;height:26px;line-height:26px;font-size:16px;transform:scaleX(1.045);transform-origin:0 0;color:#000">12.08.2025 22:5</div></div>
<div style="left:791.50px;top:229.65px;width:136.90px;height:26px;overflow:hidden"><div class="t" style="left:3.3px;top:0;height:26px;line-height:26px;font-size:16px;transform:scaleX(1.045);transform-origin:0 0;color:#000">14.08.2025 23:51</div></div>
<div style="left:1368.00px;top:229.65px;width:110.60px;height:26px;overflow:hidden"><div class="t" style="left:4.6px;top:0;height:26px;line-height:26px;font-size:16px;transform:scaleX(1.035);transform-origin:0 0;color:#000">+38 (044) 000-00-00</div></div>
<div class="t" style="left:1676.75px;top:229.65px;width:136.15px;height:26px;line-height:26px;font-size:16px;text-align:left;overflow:hidden;padding-left:3.3px;box-sizing:border-box;color:#000">tabletki.ua</div>
<div class="t" style="left:1812.90px;top:229.65px;width:95.30px;height:26px;line-height:26px;font-size:16px;text-align:right;overflow:hidden;padding-right:4.3px;box-sizing:border-box;color:#000">1291956</div>
<div class="t" style="left:1908.20px;top:229.65px;width:141.20px;height:26px;line-height:26px;font-size:16px;text-align:left;overflow:hidden;padding-left:3.3px;box-sizing:border-box;color:#000">1115436</div>
<div style="left:2121.00px;top:235.50px;width:1.50px;height:12.00px;background:#c4b474"></div>
<div class="t" style="left:17.50px;top:258.15px;width:53.70px;height:26px;line-height:26px;font-size:16px;text-align:right;overflow:hidden;padding-right:4.3px;box-sizing:border-box;color:#000">16624</div>
<div class="t" style="left:71.20px;top:258.15px;width:109.00px;height:26px;line-height:26px;font-size:16px;text-align:right;overflow:hidden;padding-right:4.3px;box-sizing:border-box;color:#000">4571698418</div>
<div class="t" style="left:180.20px;top:258.15px;width:140.00px;height:26px;line-height:26px;font-size:16px;text-align:left;overflow:hidden;padding-left:3.3px;box-sizing:border-box;color:#000">T0-62-E8-B3</div>
<div class="t" style="left:320.20px;top:258.15px;width:136.50px;height:26px;line-height:26px;font-size:16px;text-align:right;overflow:hidden;padding-right:4.3px;box-sizing:border-box;color:#000">1</div>
<div style="left:456.70px;top:258.15px;width:206.50px;height:26px;overflow:hidden"><div class="t" style="left:3.3px;top:0;height:26px;line-height:26px;font-size:16px;transform:scaleX(1.035);transform-origin:0 0;color:#000">Оброблено в аптеці</div></div>
<div style="left:663.80px;top:258.15px;width:127.10px;height:26px;overflow:hidden"><div class="t" style="left:3.3px;top:0;height:26px;line-height:26px;font-size:16px;transform:scaleX(1.045);transform-origin:0 0;color:#000">13.08.2025 06:4</div></div>
<div style="left:791.50px;top:258.15px;width:136.90px;height:26px;overflow:hidden"><div class="t" style="left:3.3px;top:0;height:26px;line-height:26px;font-size:16px;transform:scaleX(1.045);transform-origin:0 0;color:#000">15.08.2025 07:44</div></div>
<div style="left:1368.00px;top:258.15px;width:110.60px;height:26px;overflow:hidden"><div class="t" style="left:4.6px;top:0;height:26px;line-height:26px;font-size:16px;transform:scaleX(1.035);transform-origin:0 0;color:#000">+38 (044) 000-00-00</div></div>
<div class="t" style="left:1676.75px;top:258.15px;width:136.15px;height:26px;line-height:26px;font-size:16px;text-align:left;overflow:hidden;padding-left:3.3px;box-sizing:border-box;color:#000">tabletki.ua</div>
<div class="t" style="left:1812.90px;top:258.15px;width:95.30px;height:26px;line-height:26px;font-size:16px;text-align:right;overflow:hidden;padding-right:4.3px;box-sizing:border-box;color:#000">1291958</div>
<div class="t" style="left:1908.20px;top:258.15px;width:141.20px;height:26px;line-height:26px;font-size:16px;text-align:left;overflow:hidden;padding-left:3.3px;box-sizing:border-box;color:#000">1115438</div>
<div style="left:2121.00px;top:264.00px;width:1.50px;height:12.00px;background:#c4b474"></div>
<div class="t" style="left:17.50px;top:286.65px;width:53.70px;height:26px;line-height:26px;font-size:16px;text-align:right;overflow:hidden;padding-right:4.3px;box-sizing:border-box;color:#000">16625</div>
<div class="t" style="left:71.20px;top:286.65px;width:109.00px;height:26px;line-height:26px;font-size:16px;text-align:right;overflow:hidden;padding-right:4.3px;box-sizing:border-box;color:#000">1542312020</div>
<div class="t" style="left:180.20px;top:286.65px;width:140.00px;height:26px;line-height:26px;font-size:16px;text-align:left;overflow:hidden;padding-left:3.3px;box-sizing:border-box;color:#000">01-09-X1-41</div>
<div class="t" style="left:320.20px;top:286.65px;width:136.50px;height:26px;line-height:26px;font-size:16px;text-align:right;overflow:hidden;padding-right:4.3px;box-sizing:border-box;color:#000">1</div>
<div style="left:456.70px;top:286.65px;width:206.50px;height:26px;overflow:hidden"><div class="t" style="left:3.3px;top:0;height:26px;line-height:26px;font-size:16px;transform:scaleX(1.035);transform-origin:0 0;color:#000">Оброблено в аптеці</div></div>
<div style="left:663.80px;top:286.65px;width:127.10px;height:26px;overflow:hidden"><div class="t" style="left:3.3px;top:0;height:26px;line-height:26px;font-size:16px;transform:scaleX(1.045);transform-origin:0 0;color:#000">13.08.2025 06:4</div></div>
<div style="left:791.50px;top:286.65px;width:136.90px;height:26px;overflow:hidden"><div class="t" style="left:3.3px;top:0;height:26px;line-height:26px;font-size:16px;transform:scaleX(1.045);transform-origin:0 0;color:#000">15.08.2025 07:46</div></div>
<div style="left:1368.00px;top:286.65px;width:110.60px;height:26px;overflow:hidden"><div class="t" style="left:4.6px;top:0;height:26px;line-height:26px;font-size:16px;transform:scaleX(1.035);transform-origin:0 0;color:#000">+38 (044) 000-00-00</div></div>
<div class="t" style="left:1676.75px;top:286.65px;width:136.15px;height:26px;line-height:26px;font-size:16px;text-align:left;overflow:hidden;padding-left:3.3px;box-sizing:border-box;color:#000">tabletki.ua</div>
<div class="t" style="left:1812.90px;top:286.65px;width:95.30px;height:26px;line-height:26px;font-size:16px;text-align:right;overflow:hidden;padding-right:4.3px;box-sizing:border-box;color:#000">1291959</div>
<div class="t" style="left:1908.20px;top:286.65px;width:141.20px;height:26px;line-height:26px;font-size:16px;text-align:left;overflow:hidden;padding-left:3.3px;box-sizing:border-box;color:#000">1115439</div>
<div style="left:2121.00px;top:292.50px;width:1.50px;height:12.00px;background:#c4b474"></div>
<div class="t" style="left:17.50px;top:315.15px;width:53.70px;height:26px;line-height:26px;font-size:16px;text-align:right;overflow:hidden;padding-right:4.3px;box-sizing:border-box;color:#000">16629</div>
<div class="t" style="left:71.20px;top:315.15px;width:109.00px;height:26px;line-height:26px;font-size:16px;text-align:right;overflow:hidden;padding-right:4.3px;box-sizing:border-box;color:#000">6467528488</div>
<div class="t" style="left:180.20px;top:315.15px;width:140.00px;height:26px;line-height:26px;font-size:16px;text-align:left;overflow:hidden;padding-left:3.3px;box-sizing:border-box;color:#000">84-11-21-15</div>
<div class="t" style="left:320.20px;top:315.15px;width:136.50px;height:26px;line-height:26px;font-size:16px;text-align:right;overflow:hidden;padding-right:4.3px;box-sizing:border-box;color:#000">1</div>
<div style="left:456.70px;top:315.15px;width:206.50px;height:26px;overflow:hidden"><div class="t" style="left:3.3px;top:0;height:26px;line-height:26px;font-size:16px;transform:scaleX(1.035);transform-origin:0 0;color:#000">Оброблено в аптеці</div></div>
<div style="left:663.80px;top:315.15px;width:127.10px;height:26px;overflow:hidden"><div class="t" style="left:3.3px;top:0;height:26px;line-height:26px;font-size:16px;transform:scaleX(1.045);transform-origin:0 0;color:#000">13.08.2025 08:1</div></div>
<div style="left:791.50px;top:315.15px;width:136.90px;height:26px;overflow:hidden"><div class="t" style="left:3.3px;top:0;height:26px;line-height:26px;font-size:16px;transform:scaleX(1.045);transform-origin:0 0;color:#000">15.08.2025 09:14</div></div>
<div style="left:1368.00px;top:315.15px;width:110.60px;height:26px;overflow:hidden"><div class="t" style="left:4.6px;top:0;height:26px;line-height:26px;font-size:16px;transform:scaleX(1.035);transform-origin:0 0;color:#000">+38 (044) 000-00-00</div></div>
<div class="t" style="left:1676.75px;top:315.15px;width:136.15px;height:26px;line-height:26px;font-size:16px;text-align:left;overflow:hidden;padding-left:3.3px;box-sizing:border-box;color:#000">tabletki.ua</div>
<div class="t" style="left:1812.90px;top:315.15px;width:95.30px;height:26px;line-height:26px;font-size:16px;text-align:right;overflow:hidden;padding-right:4.3px;box-sizing:border-box;color:#000">1291992</div>
<div class="t" style="left:1908.20px;top:315.15px;width:141.20px;height:26px;line-height:26px;font-size:16px;text-align:left;overflow:hidden;padding-left:3.3px;box-sizing:border-box;color:#000">1115471</div>
<div style="left:2121.00px;top:321.00px;width:1.50px;height:12.00px;background:#c4b474"></div>
<div style="left:17.50px;top:342.00px;width:2105.20px;height:27.50px;background:#0078d7"></div>
<div style="left:0.00px;top:342.00px;width:17.50px;height:27.50px;background:#fff"></div>
<div style="left:663.80px;top:342.00px;width:127.70px;height:27.50px;background:#fff"></div>
<div class="t" style="left:17.50px;top:343.65px;width:53.70px;height:26px;line-height:26px;font-size:16px;text-align:right;overflow:hidden;padding-right:4.3px;box-sizing:border-box;color:#fff">16631</div>
<div class="t" style="left:71.20px;top:343.65px;width:109.00px;height:26px;line-height:26px;font-size:16px;text-align:right;overflow:hidden;padding-right:4.3px;box-sizing:border-box;color:#fff">7993957626</div>
<div class="t" style="left:180.20px;top:343.65px;width:140.00px;height:26px;line-height:26px;font-size:16px;text-align:left;overflow:hidden;padding-left:3.3px;box-sizing:border-box;color:#fff">61-H4-2T-46</div>
<div class="t" style="left:320.20px;top:343.65px;width:136.50px;height:26px;line-height:26px;font-size:16px;text-align:right;overflow:hidden;padding-right:4.3px;box-sizing:border-box;color:#fff">1</div>
<div style="left:456.70px;top:343.65px;width:206.50px;height:26px;overflow:hidden"><div class="t" style="left:3.3px;top:0;height:26px;line-height:26px;font-size:16px;transform:scaleX(1.035);transform-origin:0 0;color:#fff">Оброблено в аптеці</div></div>
<div style="left:663.80px;top:343.65px;width:127.10px;height:26px;overflow:hidden"><div class="t" style="left:3.3px;top:0;height:26px;line-height:26px;font-size:16px;transform:scaleX(1.045);transform-origin:0 0;color:#000">13.08.2025 08:2</div></div>
<div style="left:791.50px;top:343.65px;width:136.90px;height:26px;overflow:hidden"><div class="t" style="left:3.3px;top:0;height:26px;line-height:26px;font-size:16px;transform:scaleX(1.045);transform-origin:0 0;color:#fff">15.08.2025 09:24</div></div>
<div style="left:1368.00px;top:343.65px;width:110.60px;height:26px;overflow:hidden"><div class="t" style="left:4.6px;top:0;height:26px;line-height:26px;font-size:16px;transform:scaleX(1.035);transform-origin:0 0;color:#fff">+38 (044) 000-00-00</div></div>
<div class="t" style="left:1676.75px;top:343.65px;width:136.15px;height:26px;line-height:26px;font-size:16px;text-align:left;overflow:hidden;padding-left:3.3px;box-sizing:border-box;color:#fff">tabletki.ua</div>
<div class="t" style="left:1812.90px;top:343.65px;width:95.30px;height:26px;line-height:26px;font-size:16px;text-align:right;overflow:hidden;padding-right:4.3px;box-sizing:border-box;color:#fff">1291995</div>
<div class="t" style="left:1908.20px;top:343.65px;width:141.20px;height:26px;line-height:26px;font-size:16px;text-align:left;overflow:hidden;padding-left:3.3px;box-sizing:border-box;color:#fff">1115474</div>
<svg style="left:5px;top:350.65px" width="9" height="13" viewBox="0 0 9 13"><path d="M1 0.5 L8 6.5 L1 12.5 Z" fill="#000"/></svg>
<div style="left:2121.00px;top:349.50px;width:1.50px;height:12.00px;background:#d0e4f8"></div>
<div class="t" style="left:17.50px;top:372.15px;width:53.70px;height:26px;line-height:26px;font-size:16px;text-align:right;overflow:hidden;padding-right:4.3px;box-sizing:border-box;color:#000">16641</div>
<div class="t" style="left:71.20px;top:372.15px;width:109.00px;height:26px;line-height:26px;font-size:16px;text-align:right;overflow:hidden;padding-right:4.3px;box-sizing:border-box;color:#000">1980170476</div>
<div class="t" style="left:180.20px;top:372.15px;width:140.00px;height:26px;line-height:26px;font-size:16px;text-align:left;overflow:hidden;padding-left:3.3px;box-sizing:border-box;color:#000">M3-61-MT-A1</div>
<div class="t" style="left:320.20px;top:372.15px;width:136.50px;height:26px;line-height:26px;font-size:16px;text-align:right;overflow:hidden;padding-right:4.3px;box-sizing:border-box;color:#000">1</div>
<div style="left:456.70px;top:372.15px;width:206.50px;height:26px;overflow:hidden"><div class="t" style="left:3.3px;top:0;height:26px;line-height:26px;font-size:16px;transform:scaleX(1.035);transform-origin:0 0;color:#000">Оброблено в аптеці</div></div>
<div style="left:663.80px;top:372.15px;width:127.10px;height:26px;overflow:hidden"><div class="t" style="left:3.3px;top:0;height:26px;line-height:26px;font-size:16px;transform:scaleX(1.045);transform-origin:0 0;color:#000">13.08.2025 09:0</div></div>
<div style="left:791.50px;top:372.15px;width:136.90px;height:26px;overflow:hidden"><div class="t" style="left:3.3px;top:0;height:26px;line-height:26px;font-size:16px;transform:scaleX(1.045);transform-origin:0 0;color:#000">15.08.2025 10:02</div></div>
<div style="left:1368.00px;top:372.15px;width:110.60px;height:26px;overflow:hidden"><div class="t" style="left:4.6px;top:0;height:26px;line-height:26px;font-size:16px;transform:scaleX(1.035);transform-origin:0 0;color:#000">+38 (044) 000-00-00</div></div>
<div class="t" style="left:1676.75px;top:372.15px;width:136.15px;height:26px;line-height:26px;font-size:16px;text-align:left;overflow:hidden;padding-left:3.3px;box-sizing:border-box;color:#000">tabletki.ua</div>
<div class="t" style="left:1812.90px;top:372.15px;width:95.30px;height:26px;line-height:26px;font-size:16px;text-align:right;overflow:hidden;padding-right:4.3px;box-sizing:border-box;color:#000">1292126</div>
<div class="t" style="left:1908.20px;top:372.15px;width:141.20px;height:26px;line-height:26px;font-size:16px;text-align:left;overflow:hidden;padding-left:3.3px;box-sizing:border-box;color:#000">1115579</div>
<div style="left:2121.00px;top:378.00px;width:1.50px;height:12.00px;background:#c4b474"></div>
<div class="t" style="left:17.50px;top:400.65px;width:53.70px;height:26px;line-height:26px;font-size:16px;text-align:right;overflow:hidden;padding-right:4.3px;box-sizing:border-box;color:#000">16643</div>
<div class="t" style="left:71.20px;top:400.65px;width:109.00px;height:26px;line-height:26px;font-size:16px;text-align:right;overflow:hidden;padding-right:4.3px;box-sizing:border-box;color:#000">6544839776</div>
<div class="t" style="left:180.20px;top:400.65px;width:140.00px;height:26px;line-height:26px;font-size:16px;text-align:left;overflow:hidden;padding-left:3.3px;box-sizing:border-box;color:#000">M8-X4-55-25</div>
<div class="t" style="left:320.20px;top:400.65px;width:136.50px;height:26px;line-height:26px;font-size:16px;text-align:right;overflow:hidden;padding-right:4.3px;box-sizing:border-box;color:#000">2</div>
<div style="left:456.70px;top:400.65px;width:206.50px;height:26px;overflow:hidden"><div class="t" style="left:3.3px;top:0;height:26px;line-height:26px;font-size:16px;transform:scaleX(1.035);transform-origin:0 0;color:#000">Оброблено в аптеці</div></div>
<div style="left:663.80px;top:400.65px;width:127.10px;height:26px;overflow:hidden"><div class="t" style="left:3.3px;top:0;height:26px;line-height:26px;font-size:16px;transform:scaleX(1.045);transform-origin:0 0;color:#000">13.08.2025 09:3</div></div>
<div style="left:791.50px;top:400.65px;width:136.90px;height:26px;overflow:hidden"><div class="t" style="left:3.3px;top:0;height:26px;line-height:26px;font-size:16px;transform:scaleX(1.045);transform-origin:0 0;color:#000">15.08.2025 10:31</div></div>
<div style="left:1368.00px;top:400.65px;width:110.60px;height:26px;overflow:hidden"><div class="t" style="left:4.6px;top:0;height:26px;line-height:26px;font-size:16px;transform:scaleX(1.035);transform-origin:0 0;color:#000">+38 (044) 000-00-00</div></div>
<div class="t" style="left:1676.75px;top:400.65px;width:136.15px;height:26px;line-height:26px;font-size:16px;text-align:left;overflow:hidden;padding-left:3.3px;box-sizing:border-box;color:#000">tabletki.ua</div>
<div class="t" style="left:1812.90px;top:400.65px;width:95.30px;height:26px;line-height:26px;font-size:16px;text-align:right;overflow:hidden;padding-right:4.3px;box-sizing:border-box;color:#000">1292150</div>
<div class="t" style="left:1908.20px;top:400.65px;width:141.20px;height:26px;line-height:26px;font-size:16px;text-align:left;overflow:hidden;padding-left:3.3px;box-sizing:border-box;color:#000">1115602</div>
<div style="left:2121.00px;top:406.50px;width:1.50px;height:12.00px;background:#c4b474"></div>
<div class="t" style="left:17.50px;top:429.15px;width:53.70px;height:26px;line-height:26px;font-size:16px;text-align:right;overflow:hidden;padding-right:4.3px;box-sizing:border-box;color:#000">16644</div>
<div class="t" style="left:71.20px;top:429.15px;width:109.00px;height:26px;line-height:26px;font-size:16px;text-align:right;overflow:hidden;padding-right:4.3px;box-sizing:border-box;color:#000">4135094590</div>
<div class="t" style="left:180.20px;top:429.15px;width:140.00px;height:26px;line-height:26px;font-size:16px;text-align:left;overflow:hidden;padding-left:3.3px;box-sizing:border-box;color:#000">A9-M6-4C-43</div>
<div class="t" style="left:320.20px;top:429.15px;width:136.50px;height:26px;line-height:26px;font-size:16px;text-align:right;overflow:hidden;padding-right:4.3px;box-sizing:border-box;color:#000">1</div>
<div style="left:456.70px;top:429.15px;width:206.50px;height:26px;overflow:hidden"><div class="t" style="left:3.3px;top:0;height:26px;line-height:26px;font-size:16px;transform:scaleX(1.035);transform-origin:0 0;color:#000">Оброблено в аптеці</div></div>
<div style="left:663.80px;top:429.15px;width:127.10px;height:26px;overflow:hidden"><div class="t" style="left:3.3px;top:0;height:26px;line-height:26px;font-size:16px;transform:scaleX(1.045);transform-origin:0 0;color:#000">13.08.2025 09:4</div></div>
<div style="left:791.50px;top:429.15px;width:136.90px;height:26px;overflow:hidden"><div class="t" style="left:3.3px;top:0;height:26px;line-height:26px;font-size:16px;transform:scaleX(1.045);transform-origin:0 0;color:#000">15.08.2025 10:44</div></div>
<div style="left:1368.00px;top:429.15px;width:110.60px;height:26px;overflow:hidden"><div class="t" style="left:4.6px;top:0;height:26px;line-height:26px;font-size:16px;transform:scaleX(1.035);transform-origin:0 0;color:#000">+38 (044) 000-00-00</div></div>
<div class="t" style="left:1676.75px;top:429.15px;width:136.15px;height:26px;line-height:26px;font-size:16px;text-align:left;overflow:hidden;padding-left:3.3px;box-sizing:border-box;color:#000">tabletki.ua</div>
<div class="t" style="left:1812.90px;top:429.15px;width:95.30px;height:26px;line-height:26px;font-size:16px;text-align:right;overflow:hidden;padding-right:4.3px;box-sizing:border-box;color:#000">1292169</div>
<div class="t" style="left:1908.20px;top:429.15px;width:141.20px;height:26px;line-height:26px;font-size:16px;text-align:left;overflow:hidden;padding-left:3.3px;box-sizing:border-box;color:#000">1115620</div>
<div style="left:2121.00px;top:435.00px;width:1.50px;height:12.00px;background:#c4b474"></div>
<div class="t" style="left:17.50px;top:457.65px;width:53.70px;height:26px;line-height:26px;font-size:16px;text-align:right;overflow:hidden;padding-right:4.3px;box-sizing:border-box;color:#000">14689</div>
<div class="t" style="left:71.20px;top:457.65px;width:109.00px;height:26px;line-height:26px;font-size:16px;text-align:right;overflow:hidden;padding-right:4.3px;box-sizing:border-box;color:#000">1884533450</div>
<div class="t" style="left:180.20px;top:457.65px;width:140.00px;height:26px;line-height:26px;font-size:16px;text-align:left;overflow:hidden;padding-left:3.3px;box-sizing:border-box;color:#000">AC-E6-T8-91</div>
<div class="t" style="left:320.20px;top:457.65px;width:136.50px;height:26px;line-height:26px;font-size:16px;text-align:right;overflow:hidden;padding-right:4.3px;box-sizing:border-box;color:#000">1</div>
<div style="left:456.70px;top:457.65px;width:206.50px;height:26px;overflow:hidden"><div class="t" style="left:3.3px;top:0;height:26px;line-height:26px;font-size:16px;transform:scaleX(1.035);transform-origin:0 0;color:#000">Продаж</div></div>
<div style="left:663.80px;top:457.65px;width:127.10px;height:26px;overflow:hidden"><div class="t" style="left:3.3px;top:0;height:26px;line-height:26px;font-size:16px;transform:scaleX(1.045);transform-origin:0 0;color:#000">22.05.2025 08:1</div></div>
<div style="left:791.50px;top:457.65px;width:136.90px;height:26px;overflow:hidden"><div class="t" style="left:3.3px;top:0;height:26px;line-height:26px;font-size:16px;transform:scaleX(1.045);transform-origin:0 0;color:#000">24.05.2025 09:13</div></div>
<div style="left:1368.00px;top:457.65px;width:110.60px;height:26px;overflow:hidden"><div class="t" style="left:4.6px;top:0;height:26px;line-height:26px;font-size:16px;transform:scaleX(1.035);transform-origin:0 0;color:#000">+38 (044) 000-00-00</div></div>
<div class="t" style="left:1676.75px;top:457.65px;width:136.15px;height:26px;line-height:26px;font-size:16px;text-align:left;overflow:hidden;padding-left:3.3px;box-sizing:border-box;color:#000">tabletki.ua</div>
<div class="t" style="left:1812.90px;top:457.65px;width:95.30px;height:26px;line-height:26px;font-size:16px;text-align:right;overflow:hidden;padding-right:4.3px;box-sizing:border-box;color:#000">1255864</div>
<div class="t" style="left:1908.20px;top:457.65px;width:141.20px;height:26px;line-height:26px;font-size:16px;text-align:left;overflow:hidden;padding-left:3.3px;box-sizing:border-box;color:#000">1084031</div>
<div style="left:2121.00px;top:463.50px;width:1.50px;height:12.00px;background:#c4b474"></div>
<div class="t" style="left:17.50px;top:486.15px;width:53.70px;height:26px;line-height:26px;font-size:16px;text-align:right;overflow:hidden;padding-right:4.3px;box-sizing:border-box;color:#000">14690</div>
<div class="t" style="left:71.20px;top:486.15px;width:109.00px;height:26px;line-height:26px;font-size:16px;text-align:right;overflow:hidden;padding-right:4.3px;box-sizing:border-box;color:#000">3635422041</div>
<div class="t" style="left:180.20px;top:486.15px;width:140.00px;height:26px;line-height:26px;font-size:16px;text-align:left;overflow:hidden;padding-left:3.3px;box-sizing:border-box;color:#000">12-K7-1M-M2</div>
<div class="t" style="left:320.20px;top:486.15px;width:136.50px;height:26px;line-height:26px;font-size:16px;text-align:right;overflow:hidden;padding-right:4.3px;box-sizing:border-box;color:#000">1</div>
<div style="left:456.70px;top:486.15px;width:206.50px;height:26px;overflow:hidden"><div class="t" style="left:3.3px;top:0;height:26px;line-height:26px;font-size:16px;transform:scaleX(1.035);transform-origin:0 0;color:#000">Продаж</div></div>
<div style="left:663.80px;top:486.15px;width:127.10px;height:26px;overflow:hidden"><div class="t" style="left:3.3px;top:0;height:26px;line-height:26px;font-size:16px;transform:scaleX(1.045);transform-origin:0 0;color:#000">22.05.2025 08:4</div></div>
<div style="left:791.50px;top:486.15px;width:136.90px;height:26px;overflow:hidden"><div class="t" style="left:3.3px;top:0;height:26px;line-height:26px;font-size:16px;transform:scaleX(1.045);transform-origin:0 0;color:#000">24.05.2025 09:40</div></div>
<div style="left:1368.00px;top:486.15px;width:110.60px;height:26px;overflow:hidden"><div class="t" style="left:4.6px;top:0;height:26px;line-height:26px;font-size:16px;transform:scaleX(1.035);transform-origin:0 0;color:#000">+38 (044) 000-00-00</div></div>
<div class="t" style="left:1676.75px;top:486.15px;width:136.15px;height:26px;line-height:26px;font-size:16px;text-align:left;overflow:hidden;padding-left:3.3px;box-sizing:border-box;color:#000">tabletki.ua</div>
<div class="t" style="left:1812.90px;top:486.15px;width:95.30px;height:26px;line-height:26px;font-size:16px;text-align:right;overflow:hidden;padding-right:4.3px;box-sizing:border-box;color:#000">1255923</div>
<div class="t" style="left:1908.20px;top:486.15px;width:141.20px;height:26px;line-height:26px;font-size:16px;text-align:left;overflow:hidden;padding-left:3.3px;box-sizing:border-box;color:#000">1084074</div>
<div style="left:2121.00px;top:492.00px;width:1.50px;height:12.00px;background:#c4b474"></div>
<div class="t" style="left:17.50px;top:514.65px;width:53.70px;height:26px;line-height:26px;font-size:16px;text-align:right;overflow:hidden;padding-right:4.3px;box-sizing:border-box;color:#000">14691</div>
<div class="t" style="left:71.20px;top:514.65px;width:109.00px;height:26px;line-height:26px;font-size:16px;text-align:right;overflow:hidden;padding-right:4.3px;box-sizing:border-box;color:#000">2207283554</div>
<div class="t" style="left:180.20px;top:514.65px;width:140.00px;height:26px;line-height:26px;font-size:16px;text-align:left;overflow:hidden;padding-left:3.3px;box-sizing:border-box;color:#000">HP-8A-K9-H1</div>
<div class="t" style="left:320.20px;top:514.65px;width:136.50px;height:26px;line-height:26px;font-size:16px;text-align:right;overflow:hidden;padding-right:4.3px;box-sizing:border-box;color:#000">5</div>
<div style="left:456.70px;top:514.65px;width:206.50px;height:26px;overflow:hidden"><div class="t" style="left:3.3px;top:0;height:26px;line-height:26px;font-size:16px;transform:scaleX(1.035);transform-origin:0 0;color:#000">Продаж</div></div>
<div style="left:663.80px;top:514.65px;width:127.10px;height:26px;overflow:hidden"><div class="t" style="left:3.3px;top:0;height:26px;line-height:26px;font-size:16px;transform:scaleX(1.045);transform-origin:0 0;color:#000">22.05.2025 09:2</div></div>
<div style="left:791.50px;top:514.65px;width:136.90px;height:26px;overflow:hidden"><div class="t" style="left:3.3px;top:0;height:26px;line-height:26px;font-size:16px;transform:scaleX(1.045);transform-origin:0 0;color:#000">24.05.2025 10:21</div></div>
<div style="left:1368.00px;top:514.65px;width:110.60px;height:26px;overflow:hidden"><div class="t" style="left:4.6px;top:0;height:26px;line-height:26px;font-size:16px;transform:scaleX(1.035);transform-origin:0 0;color:#000">+38 (044) 000-00-00</div></div>
<div class="t" style="left:1676.75px;top:514.65px;width:136.15px;height:26px;line-height:26px;font-size:16px;text-align:left;overflow:hidden;padding-left:3.3px;box-sizing:border-box;color:#000">tabletki.ua</div>
<div class="t" style="left:1812.90px;top:514.65px;width:95.30px;height:26px;line-height:26px;font-size:16px;text-align:right;overflow:hidden;padding-right:4.3px;box-sizing:border-box;color:#000">1256011</div>
<div class="t" style="left:1908.20px;top:514.65px;width:141.20px;height:26px;line-height:26px;font-size:16px;text-align:left;overflow:hidden;padding-left:3.3px;box-sizing:border-box;color:#000">1084145</div>
<div style="left:2121.00px;top:520.50px;width:1.50px;height:12.00px;background:#c4b474"></div>
<div class="t" style="left:17.50px;top:543.15px;width:53.70px;height:26px;line-height:26px;font-size:16px;text-align:right;overflow:hidden;padding-right:4.3px;box-sizing:border-box;color:#000">14692</div>
<div class="t" style="left:71.20px;top:543.15px;width:109.00px;height:26px;line-height:26px;font-size:16px;text-align:right;overflow:hidden;padding-right:4.3px;box-sizing:border-box;color:#000">9513239987</div>
<div class="t" style="left:180.20px;top:543.15px;width:140.00px;height:26px;line-height:26px;font-size:16px;text-align:left;overflow:hidden;padding-left:3.3px;box-sizing:border-box;color:#000">7X-XH-PC-87</div>
<div class="t" style="left:320.20px;top:543.15px;width:136.50px;height:26px;line-height:26px;font-size:16px;text-align:right;overflow:hidden;padding-right:4.3px;box-sizing:border-box;color:#000">2</div>
<div style="left:456.70px;top:543.15px;width:206.50px;height:26px;overflow:hidden"><div class="t" style="left:3.3px;top:0;height:26px;line-height:26px;font-size:16px;transform:scaleX(1.035);transform-origin:0 0;color:#000">Продаж</div></div>
<div style="left:663.80px;top:543.15px;width:127.10px;height:26px;overflow:hidden"><div class="t" style="left:3.3px;top:0;height:26px;line-height:26px;font-size:16px;transform:scaleX(1.045);transform-origin:0 0;color:#000">22.05.2025 09:2</div></div>
<div style="left:791.50px;top:543.15px;width:136.90px;height:26px;overflow:hidden"><div class="t" style="left:3.3px;top:0;height:26px;line-height:26px;font-size:16px;transform:scaleX(1.045);transform-origin:0 0;color:#000">24.05.2025 10:22</div></div>
<div style="left:1368.00px;top:543.15px;width:110.60px;height:26px;overflow:hidden"><div class="t" style="left:4.6px;top:0;height:26px;line-height:26px;font-size:16px;transform:scaleX(1.035);transform-origin:0 0;color:#000">+38 (044) 000-00-00</div></div>
<div class="t" style="left:1676.75px;top:543.15px;width:136.15px;height:26px;line-height:26px;font-size:16px;text-align:left;overflow:hidden;padding-left:3.3px;box-sizing:border-box;color:#000">tabletki.ua</div>
<div class="t" style="left:1812.90px;top:543.15px;width:95.30px;height:26px;line-height:26px;font-size:16px;text-align:right;overflow:hidden;padding-right:4.3px;box-sizing:border-box;color:#000">1256012</div>
<div class="t" style="left:1908.20px;top:543.15px;width:141.20px;height:26px;line-height:26px;font-size:16px;text-align:left;overflow:hidden;padding-left:3.3px;box-sizing:border-box;color:#000">1084146</div>
<div style="left:2121.00px;top:549.00px;width:1.50px;height:12.00px;background:#c4b474"></div>
<div class="t" style="left:17.50px;top:571.65px;width:53.70px;height:26px;line-height:26px;font-size:16px;text-align:right;overflow:hidden;padding-right:4.3px;box-sizing:border-box;color:#000">14693</div>
<div class="t" style="left:71.20px;top:571.65px;width:109.00px;height:26px;line-height:26px;font-size:16px;text-align:right;overflow:hidden;padding-right:4.3px;box-sizing:border-box;color:#000">4135934538</div>
<div class="t" style="left:180.20px;top:571.65px;width:140.00px;height:26px;line-height:26px;font-size:16px;text-align:left;overflow:hidden;padding-left:3.3px;box-sizing:border-box;color:#000">T6-MB-9C-43</div>
<div class="t" style="left:320.20px;top:571.65px;width:136.50px;height:26px;line-height:26px;font-size:16px;text-align:right;overflow:hidden;padding-right:4.3px;box-sizing:border-box;color:#000">2</div>
<div style="left:456.70px;top:571.65px;width:206.50px;height:26px;overflow:hidden"><div class="t" style="left:3.3px;top:0;height:26px;line-height:26px;font-size:16px;transform:scaleX(1.035);transform-origin:0 0;color:#000">Продаж</div></div>
<div style="left:663.80px;top:571.65px;width:127.10px;height:26px;overflow:hidden"><div class="t" style="left:3.3px;top:0;height:26px;line-height:26px;font-size:16px;transform:scaleX(1.045);transform-origin:0 0;color:#000">22.05.2025 09:3</div></div>
<div style="left:791.50px;top:571.65px;width:136.90px;height:26px;overflow:hidden"><div class="t" style="left:3.3px;top:0;height:26px;line-height:26px;font-size:16px;transform:scaleX(1.045);transform-origin:0 0;color:#000">24.05.2025 10:30</div></div>
<div style="left:1368.00px;top:571.65px;width:110.60px;height:26px;overflow:hidden"><div class="t" style="left:4.6px;top:0;height:26px;line-height:26px;font-size:16px;transform:scaleX(1.035);transform-origin:0 0;color:#000">+38 (044) 000-00-00</div></div>
<div class="t" style="left:1676.75px;top:571.65px;width:136.15px;height:26px;line-height:26px;font-size:16px;text-align:left;overflow:hidden;padding-left:3.3px;box-sizing:border-box;color:#000">tabletki.ua</div>
<div class="t" style="left:1812.90px;top:571.65px;width:95.30px;height:26px;line-height:26px;font-size:16px;text-align:right;overflow:hidden;padding-right:4.3px;box-sizing:border-box;color:#000">1256022</div>
<div class="t" style="left:1908.20px;top:571.65px;width:141.20px;height:26px;line-height:26px;font-size:16px;text-align:left;overflow:hidden;padding-left:3.3px;box-sizing:border-box;color:#000">1084156</div>
<div style="left:2121.00px;top:577.50px;width:1.50px;height:12.00px;background:#c4b474"></div>
<div class="t" style="left:17.50px;top:600.15px;width:53.70px;height:26px;line-height:26px;font-size:16px;text-align:right;overflow:hidden;padding-right:4.3px;box-sizing:border-box;color:#000">14694</div>
<div class="t" style="left:71.20px;top:600.15px;width:109.00px;height:26px;line-height:26px;font-size:16px;text-align:right;overflow:hidden;padding-right:4.3px;box-sizing:border-box;color:#000">6716238643</div>
<div class="t" style="left:180.20px;top:600.15px;width:140.00px;height:26px;line-height:26px;font-size:16px;text-align:left;overflow:hidden;padding-left:3.3px;box-sizing:border-box;color:#000">3C-M9-MT-45</div>
<div class="t" style="left:320.20px;top:600.15px;width:136.50px;height:26px;line-height:26px;font-size:16px;text-align:right;overflow:hidden;padding-right:4.3px;box-sizing:border-box;color:#000">5</div>
<div style="left:456.70px;top:600.15px;width:206.50px;height:26px;overflow:hidden"><div class="t" style="left:3.3px;top:0;height:26px;line-height:26px;font-size:16px;transform:scaleX(1.035);transform-origin:0 0;color:#000">Продаж</div></div>
<div style="left:663.80px;top:600.15px;width:127.10px;height:26px;overflow:hidden"><div class="t" style="left:3.3px;top:0;height:26px;line-height:26px;font-size:16px;transform:scaleX(1.045);transform-origin:0 0;color:#000">22.05.2025 09:3</div></div>
<div style="left:791.50px;top:600.15px;width:136.90px;height:26px;overflow:hidden"><div class="t" style="left:3.3px;top:0;height:26px;line-height:26px;font-size:16px;transform:scaleX(1.045);transform-origin:0 0;color:#000">24.05.2025 10:35</div></div>
<div style="left:1368.00px;top:600.15px;width:110.60px;height:26px;overflow:hidden"><div class="t" style="left:4.6px;top:0;height:26px;line-height:26px;font-size:16px;transform:scaleX(1.035);transform-origin:0 0;color:#000">+38 (067) 495-00-00</div></div>
<div class="t" style="left:1676.75px;top:600.15px;width:136.15px;height:26px;line-height:26px;font-size:16px;text-align:left;overflow:hidden;padding-left:3.3px;box-sizing:border-box;color:#000">tabletki.ua</div>
<div class="t" style="left:1812.90px;top:600.15px;width:95.30px;height:26px;line-height:26px;font-size:16px;text-align:right;overflow:hidden;padding-right:4.3px;box-sizing:border-box;color:#000">1256030</div>
<div class="t" style="left:1908.20px;top:600.15px;width:141.20px;height:26px;line-height:26px;font-size:16px;text-align:left;overflow:hidden;padding-left:3.3px;box-sizing:border-box;color:#000">1084163</div>
<div style="left:2121.00px;top:606.00px;width:1.50px;height:12.00px;background:#c4b474"></div>
<div class="t" style="left:17.50px;top:628.65px;width:53.70px;height:26px;line-height:26px;font-size:16px;text-align:right;overflow:hidden;padding-right:4.3px;box-sizing:border-box;color:#000">14695</div>
<div class="t" style="left:71.20px;top:628.65px;width:109.00px;height:26px;line-height:26px;font-size:16px;text-align:right;overflow:hidden;padding-right:4.3px;box-sizing:border-box;color:#000">1853472527</div>
<div class="t" style="left:180.20px;top:628.65px;width:140.00px;height:26px;line-height:26px;font-size:16px;text-align:left;overflow:hidden;padding-left:3.3px;box-sizing:border-box;color:#000">76-14-4X-81</div>
<div class="t" style="left:320.20px;top:628.65px;width:136.50px;height:26px;line-height:26px;font-size:16px;text-align:right;overflow:hidden;padding-right:4.3px;box-sizing:border-box;color:#000">1</div>
<div style="left:456.70px;top:628.65px;width:206.50px;height:26px;overflow:hidden"><div class="t" style="left:3.3px;top:0;height:26px;line-height:26px;font-size:16px;transform:scaleX(1.035);transform-origin:0 0;color:#000">Продаж</div></div>
<div style="left:663.80px;top:628.65px;width:127.10px;height:26px;overflow:hidden"><div class="t" style="left:3.3px;top:0;height:26px;line-height:26px;font-size:16px;transform:scaleX(1.045);transform-origin:0 0;color:#000">22.05.2025 09:4</div></div>
<div style="left:791.50px;top:628.65px;width:136.90px;height:26px;overflow:hidden"><div class="t" style="left:3.3px;top:0;height:26px;line-height:26px;font-size:16px;transform:scaleX(1.045);transform-origin:0 0;color:#000">24.05.2025 10:41</div></div>
<div style="left:1368.00px;top:628.65px;width:110.60px;height:26px;overflow:hidden"><div class="t" style="left:4.6px;top:0;height:26px;line-height:26px;font-size:16px;transform:scaleX(1.035);transform-origin:0 0;color:#000">+38 (044) 000-00-00</div></div>
<div class="t" style="left:1676.75px;top:628.65px;width:136.15px;height:26px;line-height:26px;font-size:16px;text-align:left;overflow:hidden;padding-left:3.3px;box-sizing:border-box;color:#000">tabletki.ua</div>
<div class="t" style="left:1812.90px;top:628.65px;width:95.30px;height:26px;line-height:26px;font-size:16px;text-align:right;overflow:hidden;padding-right:4.3px;box-sizing:border-box;color:#000">1256041</div>
<div class="t" style="left:1908.20px;top:628.65px;width:141.20px;height:26px;line-height:26px;font-size:16px;text-align:left;overflow:hidden;padding-left:3.3px;box-sizing:border-box;color:#000">1084171</div>
<div style="left:2121.00px;top:634.50px;width:1.50px;height:12.00px;background:#c4b474"></div>
<div class="t" style="left:17.50px;top:657.15px;width:53.70px;height:26px;line-height:26px;font-size:16px;text-align:right;overflow:hidden;padding-right:4.3px;box-sizing:border-box;color:#000">14696</div>
<div class="t" style="left:71.20px;top:657.15px;width:109.00px;height:26px;line-height:26px;font-size:16px;text-align:right;overflow:hidden;padding-right:4.3px;box-sizing:border-box;color:#000">3177073496</div>
<div class="t" style="left:180.20px;top:657.15px;width:140.00px;height:26px;line-height:26px;font-size:16px;text-align:left;overflow:hidden;padding-left:3.3px;box-sizing:border-box;color:#000">MH-3H-MC-92</div>
<div class="t" style="left:320.20px;top:657.15px;width:136.50px;height:26px;line-height:26px;font-size:16px;text-align:right;overflow:hidden;padding-right:4.3px;box-sizing:border-box;color:#000">1</div>
<div style="left:456.70px;top:657.15px;width:206.50px;height:26px;overflow:hidden"><div class="t" style="left:3.3px;top:0;height:26px;line-height:26px;font-size:16px;transform:scaleX(1.035);transform-origin:0 0;color:#000">Продаж</div></div>
<div style="left:663.80px;top:657.15px;width:127.10px;height:26px;overflow:hidden"><div class="t" style="left:3.3px;top:0;height:26px;line-height:26px;font-size:16px;transform:scaleX(1.045);transform-origin:0 0;color:#000">22.05.2025 11:4</div></div>
<div style="left:791.50px;top:657.15px;width:136.90px;height:26px;overflow:hidden"><div class="t" style="left:3.3px;top:0;height:26px;line-height:26px;font-size:16px;transform:scaleX(1.045);transform-origin:0 0;color:#000">24.05.2025 12:47</div></div>
<div style="left:1368.00px;top:657.15px;width:110.60px;height:26px;overflow:hidden"><div class="t" style="left:4.6px;top:0;height:26px;line-height:26px;font-size:16px;transform:scaleX(1.035);transform-origin:0 0;color:#000">+38 (044) 000-00-00</div></div>
<div class="t" style="left:1676.75px;top:657.15px;width:136.15px;height:26px;line-height:26px;font-size:16px;text-align:left;overflow:hidden;padding-left:3.3px;box-sizing:border-box;color:#000">tabletki.ua</div>
<div class="t" style="left:1812.90px;top:657.15px;width:95.30px;height:26px;line-height:26px;font-size:16px;text-align:right;overflow:hidden;padding-right:4.3px;box-sizing:border-box;color:#000">1256058</div>
<div class="t" style="left:1908.20px;top:657.15px;width:141.20px;height:26px;line-height:26px;font-size:16px;text-align:left;overflow:hidden;padding-left:3.3px;box-sizing:border-box;color:#000">1084188</div>
<div style="left:2121.00px;top:663.00px;width:1.50px;height:12.00px;background:#c4b474"></div>
<div class="t" style="left:17.50px;top:685.65px;width:53.70px;height:26px;line-height:26px;font-size:16px;text-align:right;overflow:hidden;padding-right:4.3px;box-sizing:border-box;color:#000">14697</div>
<div class="t" style="left:71.20px;top:685.65px;width:109.00px;height:26px;line-height:26px;font-size:16px;text-align:right;overflow:hidden;padding-right:4.3px;box-sizing:border-box;color:#000">5898238237</div>
<div class="t" style="left:180.20px;top:685.65px;width:140.00px;height:26px;line-height:26px;font-size:16px;text-align:left;overflow:hidden;padding-left:3.3px;box-sizing:border-box;color:#000">PB-KX-33-C4</div>
<div class="t" style="left:320.20px;top:685.65px;width:136.50px;height:26px;line-height:26px;font-size:16px;text-align:right;overflow:hidden;padding-right:4.3px;box-sizing:border-box;color:#000">1</div>
<div style="left:456.70px;top:685.65px;width:206.50px;height:26px;overflow:hidden"><div class="t" style="left:3.3px;top:0;height:26px;line-height:26px;font-size:16px;transform:scaleX(1.035);transform-origin:0 0;color:#000">Продаж</div></div>
<div style="left:663.80px;top:685.65px;width:127.10px;height:26px;overflow:hidden"><div class="t" style="left:3.3px;top:0;height:26px;line-height:26px;font-size:16px;transform:scaleX(1.045);transform-origin:0 0;color:#000">22.05.2025 12:2</div></div>
<div style="left:791.50px;top:685.65px;width:136.90px;height:26px;overflow:hidden"><div class="t" style="left:3.3px;top:0;height:26px;line-height:26px;font-size:16px;transform:scaleX(1.045);transform-origin:0 0;color:#000">24.05.2025 13:27</div></div>
<div style="left:1368.00px;top:685.65px;width:110.60px;height:26px;overflow:hidden"><div class="t" style="left:4.6px;top:0;height:26px;line-height:26px;font-size:16px;transform:scaleX(1.035);transform-origin:0 0;color:#000">+38 (044) 000-00-00</div></div>
<div class="t" style="left:1676.75px;top:685.65px;width:136.15px;height:26px;line-height:26px;font-size:16px;text-align:left;overflow:hidden;padding-left:3.3px;box-sizing:border-box;color:#000">tabletki.ua</div>
<div class="t" style="left:1812.90px;top:685.65px;width:95.30px;height:26px;line-height:26px;font-size:16px;text-align:right;overflow:hidden;padding-right:4.3px;box-sizing:border-box;color:#000">1256089</div>
<div class="t" style="left:1908.20px;top:685.65px;width:141.20px;height:26px;line-height:26px;font-size:16px;text-align:left;overflow:hidden;padding-left:3.3px;box-sizing:border-box;color:#000">1084214</div>
<div style="left:2121.00px;top:691.50px;width:1.50px;height:12.00px;background:#c4b474"></div>
<div class="t" style="left:17.50px;top:714.15px;width:53.70px;height:26px;line-height:26px;font-size:16px;text-align:right;overflow:hidden;padding-right:4.3px;box-sizing:border-box;color:#000">14698</div>
<div class="t" style="left:71.20px;top:714.15px;width:109.00px;height:26px;line-height:26px;font-size:16px;text-align:right;overflow:hidden;padding-right:4.3px;box-sizing:border-box;color:#000">5519416248</div>
<div class="t" style="left:180.20px;top:714.15px;width:140.00px;height:26px;line-height:26px;font-size:16px;text-align:left;overflow:hidden;padding-left:3.3px;box-sizing:border-box;color:#000">8C-07-M4-64</div>
<div class="t" style="left:320.20px;top:714.15px;width:136.50px;height:26px;line-height:26px;font-size:16px;text-align:right;overflow:hidden;padding-right:4.3px;box-sizing:border-box;color:#000">1</div>
<div style="left:456.70px;top:714.15px;width:206.50px;height:26px;overflow:hidden"><div class="t" style="left:3.3px;top:0;height:26px;line-height:26px;font-size:16px;transform:scaleX(1.035);transform-origin:0 0;color:#000">Продаж</div></div>
<div style="left:663.80px;top:714.15px;width:127.10px;height:26px;overflow:hidden"><div class="t" style="left:3.3px;top:0;height:26px;line-height:26px;font-size:16px;transform:scaleX(1.045);transform-origin:0 0;color:#000">22.05.2025 12:5</div></div>
<div style="left:791.50px;top:714.15px;width:136.90px;height:26px;overflow:hidden"><div class="t" style="left:3.3px;top:0;height:26px;line-height:26px;font-size:16px;transform:scaleX(1.045);transform-origin:0 0;color:#000">24.05.2025 13:53</div></div>
<div style="left:1368.00px;top:714.15px;width:110.60px;height:26px;overflow:hidden"><div class="t" style="left:4.6px;top:0;height:26px;line-height:26px;font-size:16px;transform:scaleX(1.035);transform-origin:0 0;color:#000">+38 (044) 000-00-00</div></div>
<div class="t" style="left:1676.75px;top:714.15px;width:136.15px;height:26px;line-height:26px;font-size:16px;text-align:left;overflow:hidden;padding-left:3.3px;box-sizing:border-box;color:#000">tabletki.ua</div>
<div class="t" style="left:1812.90px;top:714.15px;width:95.30px;height:26px;line-height:26px;font-size:16px;text-align:right;overflow:hidden;padding-right:4.3px;box-sizing:border-box;color:#000">1256111</div>
<div class="t" style="left:1908.20px;top:714.15px;width:141.20px;height:26px;line-height:26px;font-size:16px;text-align:left;overflow:hidden;padding-left:3.3px;box-sizing:border-box;color:#000">1084232</div>
<div style="left:2121.00px;top:720.00px;width:1.50px;height:12.00px;background:#c4b474"></div>
<div class="t" style="left:17.50px;top:742.65px;width:53.70px;height:26px;line-height:26px;font-size:16px;text-align:right;overflow:hidden;padding-right:4.3px;box-sizing:border-box;color:#000">14699</div>
<div class="t" style="left:71.20px;top:742.65px;width:109.00px;height:26px;line-height:26px;font-size:16px;text-align:right;overflow:hidden;padding-right:4.3px;box-sizing:border-box;color:#000">4413511763</div>
<div class="t" style="left:180.20px;top:742.65px;width:140.00px;height:26px;line-height:26px;font-size:16px;text-align:left;overflow:hidden;padding-left:3.3px;box-sizing:border-box;color:#000">38-X8-4X-83</div>
<div class="t" style="left:320.20px;top:742.65px;width:136.50px;height:26px;line-height:26px;font-size:16px;text-align:right;overflow:hidden;padding-right:4.3px;box-sizing:border-box;color:#000">1</div>
<div style="left:456.70px;top:742.65px;width:206.50px;height:26px;overflow:hidden"><div class="t" style="left:3.3px;top:0;height:26px;line-height:26px;font-size:16px;transform:scaleX(1.035);transform-origin:0 0;color:#000">Продаж</div></div>
<div style="left:663.80px;top:742.65px;width:127.10px;height:26px;overflow:hidden"><div class="t" style="left:3.3px;top:0;height:26px;line-height:26px;font-size:16px;transform:scaleX(1.045);transform-origin:0 0;color:#000">22.05.2025 14:2</div></div>
<div style="left:791.50px;top:742.65px;width:136.90px;height:26px;overflow:hidden"><div class="t" style="left:3.3px;top:0;height:26px;line-height:26px;font-size:16px;transform:scaleX(1.045);transform-origin:0 0;color:#000">24.05.2025 15:22</div></div>
<div style="left:1368.00px;top:742.65px;width:110.60px;height:26px;overflow:hidden"><div class="t" style="left:4.6px;top:0;height:26px;line-height:26px;font-size:16px;transform:scaleX(1.035);transform-origin:0 0;color:#000">+38 (044) 000-00-00</div></div>
<div class="t" style="left:1676.75px;top:742.65px;width:136.15px;height:26px;line-height:26px;font-size:16px;text-align:left;overflow:hidden;padding-left:3.3px;box-sizing:border-box;color:#000">tabletki.ua</div>
<div class="t" style="left:1812.90px;top:742.65px;width:95.30px;height:26px;line-height:26px;font-size:16px;text-align:right;overflow:hidden;padding-right:4.3px;box-sizing:border-box;color:#000">1256165</div>
<div class="t" style="left:1908.20px;top:742.65px;width:141.20px;height:26px;line-height:26px;font-size:16px;text-align:left;overflow:hidden;padding-left:3.3px;box-sizing:border-box;color:#000">1084276</div>
<div style="left:2121.00px;top:748.50px;width:1.50px;height:12.00px;background:#c4b474"></div>
<div class="t" style="left:17.50px;top:771.15px;width:53.70px;height:26px;line-height:26px;font-size:16px;text-align:right;overflow:hidden;padding-right:4.3px;box-sizing:border-box;color:#000">14700</div>
<div class="t" style="left:71.20px;top:771.15px;width:109.00px;height:26px;line-height:26px;font-size:16px;text-align:right;overflow:hidden;padding-right:4.3px;box-sizing:border-box;color:#000">8958324963</div>
<div class="t" style="left:180.20px;top:771.15px;width:140.00px;height:26px;line-height:26px;font-size:16px;text-align:left;overflow:hidden;padding-left:3.3px;box-sizing:border-box;color:#000">38-CA-9X-X6</div>
<div class="t" style="left:320.20px;top:771.15px;width:136.50px;height:26px;line-height:26px;font-size:16px;text-align:right;overflow:hidden;padding-right:4.3px;box-sizing:border-box;color:#000">1</div>
<div style="left:456.70px;top:771.15px;width:206.50px;height:26px;overflow:hidden"><div class="t" style="left:3.3px;top:0;height:26px;line-height:26px;font-size:16px;transform:scaleX(1.035);transform-origin:0 0;color:#000">Продаж</div></div>
<div style="left:663.80px;top:771.15px;width:127.10px;height:26px;overflow:hidden"><div class="t" style="left:3.3px;top:0;height:26px;line-height:26px;font-size:16px;transform:scaleX(1.045);transform-origin:0 0;color:#000">22.05.2025 14:5</div></div>
<div style="left:791.50px;top:771.15px;width:136.90px;height:26px;overflow:hidden"><div class="t" style="left:3.3px;top:0;height:26px;line-height:26px;font-size:16px;transform:scaleX(1.045);transform-origin:0 0;color:#000">24.05.2025 15:58</div></div>
<div style="left:1368.00px;top:771.15px;width:110.60px;height:26px;overflow:hidden"><div class="t" style="left:4.6px;top:0;height:26px;line-height:26px;font-size:16px;transform:scaleX(1.035);transform-origin:0 0;color:#000">+38 (044) 000-00-00</div></div>
<div class="t" style="left:1676.75px;top:771.15px;width:136.15px;height:26px;line-height:26px;font-size:16px;text-align:left;overflow:hidden;padding-left:3.3px;box-sizing:border-box;color:#000">tabletki.ua</div>
<div class="t" style="left:1812.90px;top:771.15px;width:95.30px;height:26px;line-height:26px;font-size:16px;text-align:right;overflow:hidden;padding-right:4.3px;box-sizing:border-box;color:#000">1256186</div>
<div class="t" style="left:1908.20px;top:771.15px;width:141.20px;height:26px;line-height:26px;font-size:16px;text-align:left;overflow:hidden;padding-left:3.3px;box-sizing:border-box;color:#000">1084295</div>
<div style="left:2121.00px;top:777.00px;width:1.50px;height:12.00px;background:#c4b474"></div>
<div class="t" style="left:17.50px;top:799.65px;width:53.70px;height:26px;line-height:26px;font-size:16px;text-align:right;overflow:hidden;padding-right:4.3px;box-sizing:border-box;color:#000">14701</div>
<div class="t" style="left:71.20px;top:799.65px;width:109.00px;height:26px;line-height:26px;font-size:16px;text-align:right;overflow:hidden;padding-right:4.3px;box-sizing:border-box;color:#000">3358735052</div>
<div class="t" style="left:180.20px;top:799.65px;width:140.00px;height:26px;line-height:26px;font-size:16px;text-align:left;overflow:hidden;padding-left:3.3px;box-sizing:border-box;color:#000">CC-P1-C9-C2</div>
<div class="t" style="left:320.20px;top:799.65px;width:136.50px;height:26px;line-height:26px;font-size:16px;text-align:right;overflow:hidden;padding-right:4.3px;box-sizing:border-box;color:#000">1</div>
<div style="left:456.70px;top:799.65px;width:206.50px;height:26px;overflow:hidden"><div class="t" style="left:3.3px;top:0;height:26px;line-height:26px;font-size:16px;transform:scaleX(1.035);transform-origin:0 0;color:#000">Продаж</div></div>
<div style="left:663.80px;top:799.65px;width:127.10px;height:26px;overflow:hidden"><div class="t" style="left:3.3px;top:0;height:26px;line-height:26px;font-size:16px;transform:scaleX(1.045);transform-origin:0 0;color:#000">22.05.2025 15:3</div></div>
<div style="left:791.50px;top:799.65px;width:136.90px;height:26px;overflow:hidden"><div class="t" style="left:3.3px;top:0;height:26px;line-height:26px;font-size:16px;transform:scaleX(1.045);transform-origin:0 0;color:#000">24.05.2025 16:36</div></div>
<div style="left:1368.00px;top:799.65px;width:110.60px;height:26px;overflow:hidden"><div class="t" style="left:4.6px;top:0;height:26px;line-height:26px;font-size:16px;transform:scaleX(1.035);transform-origin:0 0;color:#000">+38 (044) 000-00-00</div></div>
<div class="t" style="left:1676.75px;top:799.65px;width:136.15px;height:26px;line-height:26px;font-size:16px;text-align:left;overflow:hidden;padding-left:3.3px;box-sizing:border-box;color:#000">tabletki.ua</div>
<div class="t" style="left:1812.90px;top:799.65px;width:95.30px;height:26px;line-height:26px;font-size:16px;text-align:right;overflow:hidden;padding-right:4.3px;box-sizing:border-box;color:#000">1256206</div>
<div class="t" style="left:1908.20px;top:799.65px;width:141.20px;height:26px;line-height:26px;font-size:16px;text-align:left;overflow:hidden;padding-left:3.3px;box-sizing:border-box;color:#000">1084313</div>
<div style="left:2121.00px;top:805.50px;width:1.50px;height:12.00px;background:#c4b474"></div>
<div class="t" style="left:17.50px;top:828.15px;width:53.70px;height:26px;line-height:26px;font-size:16px;text-align:right;overflow:hidden;padding-right:4.3px;box-sizing:border-box;color:#000">14702</div>
<div class="t" style="left:71.20px;top:828.15px;width:109.00px;height:26px;line-height:26px;font-size:16px;text-align:right;overflow:hidden;padding-right:4.3px;box-sizing:border-box;color:#000">5045267617</div>
<div class="t" style="left:180.20px;top:828.15px;width:140.00px;height:26px;line-height:26px;font-size:16px;text-align:left;overflow:hidden;padding-left:3.3px;box-sizing:border-box;color:#000">P0-9T-CM-T3</div>
<div class="t" style="left:320.20px;top:828.15px;width:136.50px;height:26px;line-height:26px;font-size:16px;text-align:right;overflow:hidden;padding-right:4.3px;box-sizing:border-box;color:#000">1</div>
<div style="left:456.70px;top:828.15px;width:206.50px;height:26px;overflow:hidden"><div class="t" style="left:3.3px;top:0;height:26px;line-height:26px;font-size:16px;transform:scaleX(1.035);transform-origin:0 0;color:#000">Продаж</div></div>
<div style="left:663.80px;top:828.15px;width:127.10px;height:26px;overflow:hidden"><div class="t" style="left:3.3px;top:0;height:26px;line-height:26px;font-size:16px;transform:scaleX(1.045);transform-origin:0 0;color:#000">22.05.2025 15:5</div></div>
<div style="left:791.50px;top:828.15px;width:136.90px;height:26px;overflow:hidden"><div class="t" style="left:3.3px;top:0;height:26px;line-height:26px;font-size:16px;transform:scaleX(1.045);transform-origin:0 0;color:#000">24.05.2025 16:50</div></div>
<div style="left:1368.00px;top:828.15px;width:110.60px;height:26px;overflow:hidden"><div class="t" style="left:4.6px;top:0;height:26px;line-height:26px;font-size:16px;transform:scaleX(1.035);transform-origin:0 0;color:#000">+38 (044) 000-00-00</div></div>
<div class="t" style="left:1676.75px;top:828.15px;width:136.15px;height:26px;line-height:26px;font-size:16px;text-align:left;overflow:hidden;padding-left:3.3px;box-sizing:border-box;color:#000">tabletki.ua</div>
<div class="t" style="left:1812.90px;top:828.15px;width:95.30px;height:26px;line-height:26px;font-size:16px;text-align:right;overflow:hidden;padding-right:4.3px;box-sizing:border-box;color:#000">1256219</div>
<div class="t" style="left:1908.20px;top:828.15px;width:141.20px;height:26px;line-height:26px;font-size:16px;text-align:left;overflow:hidden;padding-left:3.3px;box-sizing:border-box;color:#000">1084321</div>
<div style="left:2121.00px;top:834.00px;width:1.50px;height:12.00px;background:#c4b474"></div>
<div class="t" style="left:17.50px;top:856.65px;width:53.70px;height:26px;line-height:26px;font-size:16px;text-align:right;overflow:hidden;padding-right:4.3px;box-sizing:border-box;color:#000">14703</div>
<div class="t" style="left:71.20px;top:856.65px;width:109.00px;height:26px;line-height:26px;font-size:16px;text-align:right;overflow:hidden;padding-right:4.3px;box-sizing:border-box;color:#000">7751271519</div>
<div class="t" style="left:180.20px;top:856.65px;width:140.00px;height:26px;line-height:26px;font-size:16px;text-align:left;overflow:hidden;padding-left:3.3px;box-sizing:border-box;color:#000">XK-T8-52-16</div>
<div class="t" style="left:320.20px;top:856.65px;width:136.50px;height:26px;line-height:26px;font-size:16px;text-align:right;overflow:hidden;padding-right:4.3px;box-sizing:border-box;color:#000">1</div>
<div style="left:456.70px;top:856.65px;width:206.50px;height:26px;overflow:hidden"><div class="t" style="left:3.3px;top:0;height:26px;line-height:26px;font-size:16px;transform:scaleX(1.035);transform-origin:0 0;color:#000">Продаж</div></div>
<div style="left:663.80px;top:856.65px;width:127.10px;height:26px;overflow:hidden"><div class="t" style="left:3.3px;top:0;height:26px;line-height:26px;font-size:16px;transform:scaleX(1.045);transform-origin:0 0;color:#000">22.05.2025 16:4</div></div>
<div style="left:791.50px;top:856.65px;width:136.90px;height:26px;overflow:hidden"><div class="t" style="left:3.3px;top:0;height:26px;line-height:26px;font-size:16px;transform:scaleX(1.045);transform-origin:0 0;color:#000">24.05.2025 17:48</div></div>
<div style="left:1368.00px;top:856.65px;width:110.60px;height:26px;overflow:hidden"><div class="t" style="left:4.6px;top:0;height:26px;line-height:26px;font-size:16px;transform:scaleX(1.035);transform-origin:0 0;color:#000">+38 (044) 000-00-00</div></div>
<div class="t" style="left:1676.75px;top:856.65px;width:136.15px;height:26px;line-height:26px;font-size:16px;text-align:left;overflow:hidden;padding-left:3.3px;box-sizing:border-box;color:#000">tabletki.ua</div>
<div class="t" style="left:1812.90px;top:856.65px;width:95.30px;height:26px;line-height:26px;font-size:16px;text-align:right;overflow:hidden;padding-right:4.3px;box-sizing:border-box;color:#000">1256244</div>
<div class="t" style="left:1908.20px;top:856.65px;width:141.20px;height:26px;line-height:26px;font-size:16px;text-align:left;overflow:hidden;padding-left:3.3px;box-sizing:border-box;color:#000">1084343</div>
<div style="left:2121.00px;top:862.50px;width:1.50px;height:12.00px;background:#c4b474"></div>
<div class="t" style="left:17.50px;top:885.15px;width:53.70px;height:26px;line-height:26px;font-size:16px;text-align:right;overflow:hidden;padding-right:4.3px;box-sizing:border-box;color:#000">14704</div>
<div class="t" style="left:71.20px;top:885.15px;width:109.00px;height:26px;line-height:26px;font-size:16px;text-align:right;overflow:hidden;padding-right:4.3px;box-sizing:border-box;color:#000">6734488450</div>
<div class="t" style="left:180.20px;top:885.15px;width:140.00px;height:26px;line-height:26px;font-size:16px;text-align:left;overflow:hidden;padding-left:3.3px;box-sizing:border-box;color:#000">A2-1B-A4-55</div>
<div class="t" style="left:320.20px;top:885.15px;width:136.50px;height:26px;line-height:26px;font-size:16px;text-align:right;overflow:hidden;padding-right:4.3px;box-sizing:border-box;color:#000">1</div>
<div style="left:456.70px;top:885.15px;width:206.50px;height:26px;overflow:hidden"><div class="t" style="left:3.3px;top:0;height:26px;line-height:26px;font-size:16px;transform:scaleX(1.035);transform-origin:0 0;color:#000">Продаж</div></div>
<div style="left:663.80px;top:885.15px;width:127.10px;height:26px;overflow:hidden"><div class="t" style="left:3.3px;top:0;height:26px;line-height:26px;font-size:16px;transform:scaleX(1.045);transform-origin:0 0;color:#000">22.05.2025 17:0</div></div>
<div style="left:791.50px;top:885.15px;width:136.90px;height:26px;overflow:hidden"><div class="t" style="left:3.3px;top:0;height:26px;line-height:26px;font-size:16px;transform:scaleX(1.045);transform-origin:0 0;color:#000">24.05.2025 18:04</div></div>
<div style="left:1368.00px;top:885.15px;width:110.60px;height:26px;overflow:hidden"><div class="t" style="left:4.6px;top:0;height:26px;line-height:26px;font-size:16px;transform:scaleX(1.035);transform-origin:0 0;color:#000">+38 (044) 000-00-00</div></div>
<div class="t" style="left:1676.75px;top:885.15px;width:136.15px;height:26px;line-height:26px;font-size:16px;text-align:left;overflow:hidden;padding-left:3.3px;box-sizing:border-box;color:#000">tabletki.ua</div>
<div class="t" style="left:1812.90px;top:885.15px;width:95.30px;height:26px;line-height:26px;font-size:16px;text-align:right;overflow:hidden;padding-right:4.3px;box-sizing:border-box;color:#000">1256248</div>
<div class="t" style="left:1908.20px;top:885.15px;width:141.20px;height:26px;line-height:26px;font-size:16px;text-align:left;overflow:hidden;padding-left:3.3px;box-sizing:border-box;color:#000">1084346</div>
<div style="left:2121.00px;top:891.00px;width:1.50px;height:12.00px;background:#c4b474"></div>
<div class="t" style="left:17.50px;top:913.65px;width:53.70px;height:26px;line-height:26px;font-size:16px;text-align:right;overflow:hidden;padding-right:4.3px;box-sizing:border-box;color:#000">14705</div>
<div class="t" style="left:71.20px;top:913.65px;width:109.00px;height:26px;line-height:26px;font-size:16px;text-align:right;overflow:hidden;padding-right:4.3px;box-sizing:border-box;color:#000">6122876519</div>
<div class="t" style="left:180.20px;top:913.65px;width:140.00px;height:26px;line-height:26px;font-size:16px;text-align:left;overflow:hidden;padding-left:3.3px;box-sizing:border-box;color:#000">X5-BX-7E-K4</div>
<div class="t" style="left:320.20px;top:913.65px;width:136.50px;height:26px;line-height:26px;font-size:16px;text-align:right;overflow:hidden;padding-right:4.3px;box-sizing:border-box;color:#000">1</div>
<div style="left:456.70px;top:913.65px;width:206.50px;height:26px;overflow:hidden"><div class="t" style="left:3.3px;top:0;height:26px;line-height:26px;font-size:16px;transform:scaleX(1.035);transform-origin:0 0;color:#000">Продаж</div></div>
<div style="left:663.80px;top:913.65px;width:127.10px;height:26px;overflow:hidden"><div class="t" style="left:3.3px;top:0;height:26px;line-height:26px;font-size:16px;transform:scaleX(1.045);transform-origin:0 0;color:#000">22.05.2025 17:5</div></div>
<div style="left:791.50px;top:913.65px;width:136.90px;height:26px;overflow:hidden"><div class="t" style="left:3.3px;top:0;height:26px;line-height:26px;font-size:16px;transform:scaleX(1.045);transform-origin:0 0;color:#000">24.05.2025 18:51</div></div>
<div style="left:1368.00px;top:913.65px;width:110.60px;height:26px;overflow:hidden"><div class="t" style="left:4.6px;top:0;height:26px;line-height:26px;font-size:16px;transform:scaleX(1.035);transform-origin:0 0;color:#000">+38 (044) 000-00-00</div></div>
<div class="t" style="left:1676.75px;top:913.65px;width:136.15px;height:26px;line-height:26px;font-size:16px;text-align:left;overflow:hidden;padding-left:3.3px;box-sizing:border-box;color:#000">tabletki.ua</div>
<div class="t" style="left:1812.90px;top:913.65px;width:95.30px;height:26px;line-height:26px;font-size:16px;text-align:right;overflow:hidden;padding-right:4.3px;box-sizing:border-box;color:#000">1256260</div>
<div class="t" style="left:1908.20px;top:913.65px;width:141.20px;height:26px;line-height:26px;font-size:16px;text-align:left;overflow:hidden;padding-left:3.3px;box-sizing:border-box;color:#000">1084356</div>
<div style="left:2121.00px;top:919.50px;width:1.50px;height:12.00px;background:#c4b474"></div>
<div class="t" style="left:17.50px;top:942.15px;width:53.70px;height:26px;line-height:26px;font-size:16px;text-align:right;overflow:hidden;padding-right:4.3px;box-sizing:border-box;color:#000">14706</div>
<div class="t" style="left:71.20px;top:942.15px;width:109.00px;height:26px;line-height:26px;font-size:16px;text-align:right;overflow:hidden;padding-right:4.3px;box-sizing:border-box;color:#000">9534063552</div>
<div class="t" style="left:180.20px;top:942.15px;width:140.00px;height:26px;line-height:26px;font-size:16px;text-align:left;overflow:hidden;padding-left:3.3px;box-sizing:border-box;color:#000">CP-TP-7X-87</div>
<div class="t" style="left:320.20px;top:942.15px;width:136.50px;height:26px;line-height:26px;font-size:16px;text-align:right;overflow:hidden;padding-right:4.3px;box-sizing:border-box;color:#000">1</div>
<div style="left:456.70px;top:942.15px;width:206.50px;height:26px;overflow:hidden"><div class="t" style="left:3.3px;top:0;height:26px;line-height:26px;font-size:16px;transform:scaleX(1.035);transform-origin:0 0;color:#000">Продаж</div></div>
<div style="left:663.80px;top:942.15px;width:127.10px;height:26px;overflow:hidden"><div class="t" style="left:3.3px;top:0;height:26px;line-height:26px;font-size:16px;transform:scaleX(1.045);transform-origin:0 0;color:#000">22.05.2025 18:5</div></div>
<div style="left:791.50px;top:942.15px;width:136.90px;height:26px;overflow:hidden"><div class="t" style="left:3.3px;top:0;height:26px;line-height:26px;font-size:16px;transform:scaleX(1.045);transform-origin:0 0;color:#000">24.05.2025 19:59</div></div>
<div style="left:1368.00px;top:942.15px;width:110.60px;height:26px;overflow:hidden"><div class="t" style="left:4.6px;top:0;height:26px;line-height:26px;font-size:16px;transform:scaleX(1.035);transform-origin:0 0;color:#000">+38 (044) 000-00-00</div></div>
<div class="t" style="left:1676.75px;top:942.15px;width:136.15px;height:26px;line-height:26px;font-size:16px;text-align:left;overflow:hidden;padding-left:3.3px;box-sizing:border-box;color:#000">tabletki.ua</div>
<div class="t" style="left:1812.90px;top:942.15px;width:95.30px;height:26px;line-height:26px;font-size:16px;text-align:right;overflow:hidden;padding-right:4.3px;box-sizing:border-box;color:#000">1256298</div>
<div class="t" style="left:1908.20px;top:942.15px;width:141.20px;height:26px;line-height:26px;font-size:16px;text-align:left;overflow:hidden;padding-left:3.3px;box-sizing:border-box;color:#000">1084393</div>
<div style="left:2121.00px;top:948.00px;width:1.50px;height:12.00px;background:#c4b474"></div>
<div class="t" style="left:17.50px;top:970.65px;width:53.70px;height:26px;line-height:26px;font-size:16px;text-align:right;overflow:hidden;padding-right:4.3px;box-sizing:border-box;color:#000">14707</div>
<div class="t" style="left:71.20px;top:970.65px;width:109.00px;height:26px;line-height:26px;font-size:16px;text-align:right;overflow:hidden;padding-right:4.3px;box-sizing:border-box;color:#000">1036956491</div>
<div class="t" style="left:180.20px;top:970.65px;width:140.00px;height:26px;line-height:26px;font-size:16px;text-align:left;overflow:hidden;padding-left:3.3px;box-sizing:border-box;color:#000">B4-BX-04-M0</div>
<div class="t" style="left:320.20px;top:970.65px;width:136.50px;height:26px;line-height:26px;font-size:16px;text-align:right;overflow:hidden;padding-right:4.3px;box-sizing:border-box;color:#000">1</div>
<div style="left:456.70px;top:970.65px;width:206.50px;height:26px;overflow:hidden"><div class="t" style="left:3.3px;top:0;height:26px;line-height:26px;font-size:16px;transform:scaleX(1.035);transform-origin:0 0;color:#000">Продаж</div></div>
<div style="left:663.80px;top:970.65px;width:127.10px;height:26px;overflow:hidden"><div class="t" style="left:3.3px;top:0;height:26px;line-height:26px;font-size:16px;transform:scaleX(1.045);transform-origin:0 0;color:#000">22.05.2025 19:5</div></div>
<div style="left:791.50px;top:970.65px;width:136.90px;height:26px;overflow:hidden"><div class="t" style="left:3.3px;top:0;height:26px;line-height:26px;font-size:16px;transform:scaleX(1.045);transform-origin:0 0;color:#000">24.05.2025 20:55</div></div>
<div style="left:1368.00px;top:970.65px;width:110.60px;height:26px;overflow:hidden"><div class="t" style="left:4.6px;top:0;height:26px;line-height:26px;font-size:16px;transform:scaleX(1.035);transform-origin:0 0;color:#000">+38 (044) 000-00-00</div></div>
<div class="t" style="left:1676.75px;top:970.65px;width:136.15px;height:26px;line-height:26px;font-size:16px;text-align:left;overflow:hidden;padding-left:3.3px;box-sizing:border-box;color:#000">tabletki.ua</div>
<div class="t" style="left:1812.90px;top:970.65px;width:95.30px;height:26px;line-height:26px;font-size:16px;text-align:right;overflow:hidden;padding-right:4.3px;box-sizing:border-box;color:#000">1256320</div>
<div class="t" style="left:1908.20px;top:970.65px;width:141.20px;height:26px;line-height:26px;font-size:16px;text-align:left;overflow:hidden;padding-left:3.3px;box-sizing:border-box;color:#000">1084414</div>
<div style="left:2121.00px;top:976.50px;width:1.50px;height:12.00px;background:#c4b474"></div>
<div class="t" style="left:17.50px;top:999.15px;width:53.70px;height:26px;line-height:26px;font-size:16px;text-align:right;overflow:hidden;padding-right:4.3px;box-sizing:border-box;color:#000">14708</div>
<div class="t" style="left:71.20px;top:999.15px;width:109.00px;height:26px;line-height:26px;font-size:16px;text-align:right;overflow:hidden;padding-right:4.3px;box-sizing:border-box;color:#000">5867844611</div>
<div class="t" style="left:180.20px;top:999.15px;width:140.00px;height:26px;line-height:26px;font-size:16px;text-align:left;overflow:hidden;padding-left:3.3px;box-sizing:border-box;color:#000">BA-B0-HE-B4</div>
<div class="t" style="left:320.20px;top:999.15px;width:136.50px;height:26px;line-height:26px;font-size:16px;text-align:right;overflow:hidden;padding-right:4.3px;box-sizing:border-box;color:#000">1</div>
<div style="left:456.70px;top:999.15px;width:206.50px;height:26px;overflow:hidden"><div class="t" style="left:3.3px;top:0;height:26px;line-height:26px;font-size:16px;transform:scaleX(1.035);transform-origin:0 0;color:#000">Продаж</div></div>
<div style="left:663.80px;top:999.15px;width:127.10px;height:26px;overflow:hidden"><div class="t" style="left:3.3px;top:0;height:26px;line-height:26px;font-size:16px;transform:scaleX(1.045);transform-origin:0 0;color:#000">22.05.2025 20:1</div></div>
<div style="left:791.50px;top:999.15px;width:136.90px;height:26px;overflow:hidden"><div class="t" style="left:3.3px;top:0;height:26px;line-height:26px;font-size:16px;transform:scaleX(1.045);transform-origin:0 0;color:#000">24.05.2025 21:11</div></div>
<div style="left:1368.00px;top:999.15px;width:110.60px;height:26px;overflow:hidden"><div class="t" style="left:4.6px;top:0;height:26px;line-height:26px;font-size:16px;transform:scaleX(1.035);transform-origin:0 0;color:#000">+38 (044) 000-00-00</div></div>
<div class="t" style="left:1676.75px;top:999.15px;width:136.15px;height:26px;line-height:26px;font-size:16px;text-align:left;overflow:hidden;padding-left:3.3px;box-sizing:border-box;color:#000">tabletki.ua</div>
<div class="t" style="left:1812.90px;top:999.15px;width:95.30px;height:26px;line-height:26px;font-size:16px;text-align:right;overflow:hidden;padding-right:4.3px;box-sizing:border-box;color:#000">1256322</div>
<div class="t" style="left:1908.20px;top:999.15px;width:141.20px;height:26px;line-height:26px;font-size:16px;text-align:left;overflow:hidden;padding-left:3.3px;box-sizing:border-box;color:#000">1084416</div>
<div style="left:2121.00px;top:1005.00px;width:1.50px;height:12.00px;background:#c4b474"></div>
<div style="left:16.00px;top:0.00px;width:3.00px;height:1014.40px;background:linear-gradient(90deg,rgba(0,0,0,0.075) 33.3%,transparent 33.3%,transparent 66.6%,rgba(0,0,0,0.135) 66.6%)"></div>
<div style="left:70.00px;top:0.00px;width:3.00px;height:1014.40px;background:linear-gradient(90deg,rgba(0,0,0,0.075) 33.3%,transparent 33.3%,transparent 66.6%,rgba(0,0,0,0.135) 66.6%)"></div>
<div style="left:179.00px;top:0.00px;width:3.00px;height:1014.40px;background:linear-gradient(90deg,rgba(0,0,0,0.075) 33.3%,transparent 33.3%,transparent 66.6%,rgba(0,0,0,0.135) 66.6%)"></div>
<div style="left:319.00px;top:0.00px;width:3.00px;height:1014.40px;background:linear-gradient(90deg,rgba(0,0,0,0.075) 33.3%,transparent 33.3%,transparent 66.6%,rgba(0,0,0,0.135) 66.6%)"></div>
<div style="left:455.00px;top:0.00px;width:3.00px;height:1014.40px;background:linear-gradient(90deg,rgba(0,0,0,0.075) 33.3%,transparent 33.3%,transparent 66.6%,rgba(0,0,0,0.135) 66.6%)"></div>
<div style="left:662.00px;top:0.00px;width:3.00px;height:1014.40px;background:linear-gradient(90deg,rgba(0,0,0,0.075) 33.3%,transparent 33.3%,transparent 66.6%,rgba(0,0,0,0.135) 66.6%)"></div>
<div style="left:790.00px;top:0.00px;width:3.00px;height:1014.40px;background:linear-gradient(90deg,rgba(0,0,0,0.075) 33.3%,transparent 33.3%,transparent 66.6%,rgba(0,0,0,0.135) 66.6%)"></div>
<div style="left:928.00px;top:0.00px;width:3.00px;height:1014.40px;background:linear-gradient(90deg,rgba(0,0,0,0.075) 33.3%,transparent 33.3%,transparent 66.6%,rgba(0,0,0,0.135) 66.6%)"></div>
<div style="left:1082.00px;top:0.00px;width:3.00px;height:1014.40px;background:linear-gradient(90deg,rgba(0,0,0,0.075) 33.3%,transparent 33.3%,transparent 66.6%,rgba(0,0,0,0.135) 66.6%)"></div>
<div style="left:1232.00px;top:0.00px;width:3.00px;height:1014.40px;background:linear-gradient(90deg,rgba(0,0,0,0.075) 33.3%,transparent 33.3%,transparent 66.6%,rgba(0,0,0,0.135) 66.6%)"></div>
<div style="left:1367.00px;top:0.00px;width:3.00px;height:1014.40px;background:linear-gradient(90deg,rgba(0,0,0,0.075) 33.3%,transparent 33.3%,transparent 66.6%,rgba(0,0,0,0.135) 66.6%)"></div>
<div style="left:1481.00px;top:0.00px;width:3.00px;height:1014.40px;background:linear-gradient(90deg,rgba(0,0,0,0.075) 33.3%,transparent 33.3%,transparent 66.6%,rgba(0,0,0,0.135) 66.6%)"></div>
<div style="left:1675.00px;top:0.00px;width:3.00px;height:1014.40px;background:linear-gradient(90deg,rgba(0,0,0,0.075) 33.3%,transparent 33.3%,transparent 66.6%,rgba(0,0,0,0.135) 66.6%)"></div>
<div style="left:1811.00px;top:0.00px;width:3.00px;height:1014.40px;background:linear-gradient(90deg,rgba(0,0,0,0.075) 33.3%,transparent 33.3%,transparent 66.6%,rgba(0,0,0,0.135) 66.6%)"></div>
<div style="left:1907.00px;top:0.00px;width:3.00px;height:1014.40px;background:linear-gradient(90deg,rgba(0,0,0,0.075) 33.3%,transparent 33.3%,transparent 66.6%,rgba(0,0,0,0.135) 66.6%)"></div>
<div style="left:2048.00px;top:0.00px;width:3.00px;height:1014.40px;background:linear-gradient(90deg,rgba(0,0,0,0.075) 33.3%,transparent 33.3%,transparent 66.6%,rgba(0,0,0,0.135) 66.6%)"></div>
<div style="left:0.00px;top:26.40px;width:2122.70px;height:3.00px;background:linear-gradient(rgba(0,0,0,0.075) 33.3%,#a4a4a4 33.3%,#a4a4a4 66.6%,rgba(0,0,0,0.15) 66.6%)"></div>
<div style="left:0.00px;top:54.40px;width:2122.70px;height:3.00px;background:linear-gradient(rgba(0,0,0,0.075) 33.3%,#a4a4a4 33.3%,#a4a4a4 66.6%,rgba(0,0,0,0.15) 66.6%)"></div>
<div style="left:0.00px;top:83.40px;width:2122.70px;height:3.00px;background:linear-gradient(rgba(0,0,0,0.075) 33.3%,#a4a4a4 33.3%,#a4a4a4 66.6%,rgba(0,0,0,0.15) 66.6%)"></div>
<div style="left:0.00px;top:111.40px;width:2122.70px;height:3.00px;background:linear-gradient(rgba(0,0,0,0.075) 33.3%,#a4a4a4 33.3%,#a4a4a4 66.6%,rgba(0,0,0,0.15) 66.6%)"></div>
<div style="left:0.00px;top:140.40px;width:2122.70px;height:3.00px;background:linear-gradient(rgba(0,0,0,0.075) 33.3%,#a4a4a4 33.3%,#a4a4a4 66.6%,rgba(0,0,0,0.15) 66.6%)"></div>
<div style="left:0.00px;top:168.40px;width:2122.70px;height:3.00px;background:linear-gradient(rgba(0,0,0,0.075) 33.3%,#a4a4a4 33.3%,#a4a4a4 66.6%,rgba(0,0,0,0.15) 66.6%)"></div>
<div style="left:0.00px;top:197.40px;width:2122.70px;height:3.00px;background:linear-gradient(rgba(0,0,0,0.075) 33.3%,#a4a4a4 33.3%,#a4a4a4 66.6%,rgba(0,0,0,0.15) 66.6%)"></div>
<div style="left:0.00px;top:225.40px;width:2122.70px;height:3.00px;background:linear-gradient(rgba(0,0,0,0.075) 33.3%,#a4a4a4 33.3%,#a4a4a4 66.6%,rgba(0,0,0,0.15) 66.6%)"></div>
<div style="left:0.00px;top:254.40px;width:2122.70px;height:3.00px;background:linear-gradient(rgba(0,0,0,0.075) 33.3%,#a4a4a4 33.3%,#a4a4a4 66.6%,rgba(0,0,0,0.15) 66.6%)"></div>
<div style="left:0.00px;top:282.40px;width:2122.70px;height:3.00px;background:linear-gradient(rgba(0,0,0,0.075) 33.3%,#a4a4a4 33.3%,#a4a4a4 66.6%,rgba(0,0,0,0.15) 66.6%)"></div>
<div style="left:0.00px;top:311.40px;width:2122.70px;height:3.00px;background:linear-gradient(rgba(0,0,0,0.075) 33.3%,#a4a4a4 33.3%,#a4a4a4 66.6%,rgba(0,0,0,0.15) 66.6%)"></div>
<div style="left:0.00px;top:339.40px;width:2122.70px;height:3.00px;background:linear-gradient(rgba(0,0,0,0.075) 33.3%,#a4a4a4 33.3%,#a4a4a4 66.6%,rgba(0,0,0,0.15) 66.6%)"></div>
<div style="left:0.00px;top:368.40px;width:2122.70px;height:3.00px;background:linear-gradient(rgba(0,0,0,0.075) 33.3%,#a4a4a4 33.3%,#a4a4a4 66.6%,rgba(0,0,0,0.15) 66.6%)"></div>
<div style="left:0.00px;top:396.40px;width:2122.70px;height:3.00px;background:linear-gradient(rgba(0,0,0,0.075) 33.3%,#a4a4a4 33.3%,#a4a4a4 66.6%,rgba(0,0,0,0.15) 66.6%)"></div>
<div style="left:0.00px;top:425.40px;width:2122.70px;height:3.00px;background:linear-gradient(rgba(0,0,0,0.075) 33.3%,#a4a4a4 33.3%,#a4a4a4 66.6%,rgba(0,0,0,0.15) 66.6%)"></div>
<div style="left:0.00px;top:453.40px;width:2122.70px;height:3.00px;background:linear-gradient(rgba(0,0,0,0.075) 33.3%,#a4a4a4 33.3%,#a4a4a4 66.6%,rgba(0,0,0,0.15) 66.6%)"></div>
<div style="left:0.00px;top:482.40px;width:2122.70px;height:3.00px;background:linear-gradient(rgba(0,0,0,0.075) 33.3%,#a4a4a4 33.3%,#a4a4a4 66.6%,rgba(0,0,0,0.15) 66.6%)"></div>
<div style="left:0.00px;top:510.40px;width:2122.70px;height:3.00px;background:linear-gradient(rgba(0,0,0,0.075) 33.3%,#a4a4a4 33.3%,#a4a4a4 66.6%,rgba(0,0,0,0.15) 66.6%)"></div>
<div style="left:0.00px;top:539.40px;width:2122.70px;height:3.00px;background:linear-gradient(rgba(0,0,0,0.075) 33.3%,#a4a4a4 33.3%,#a4a4a4 66.6%,rgba(0,0,0,0.15) 66.6%)"></div>
<div style="left:0.00px;top:567.40px;width:2122.70px;height:3.00px;background:linear-gradient(rgba(0,0,0,0.075) 33.3%,#a4a4a4 33.3%,#a4a4a4 66.6%,rgba(0,0,0,0.15) 66.6%)"></div>
<div style="left:0.00px;top:596.40px;width:2122.70px;height:3.00px;background:linear-gradient(rgba(0,0,0,0.075) 33.3%,#a4a4a4 33.3%,#a4a4a4 66.6%,rgba(0,0,0,0.15) 66.6%)"></div>
<div style="left:0.00px;top:624.40px;width:2122.70px;height:3.00px;background:linear-gradient(rgba(0,0,0,0.075) 33.3%,#a4a4a4 33.3%,#a4a4a4 66.6%,rgba(0,0,0,0.15) 66.6%)"></div>
<div style="left:0.00px;top:653.40px;width:2122.70px;height:3.00px;background:linear-gradient(rgba(0,0,0,0.075) 33.3%,#a4a4a4 33.3%,#a4a4a4 66.6%,rgba(0,0,0,0.15) 66.6%)"></div>
<div style="left:0.00px;top:681.40px;width:2122.70px;height:3.00px;background:linear-gradient(rgba(0,0,0,0.075) 33.3%,#a4a4a4 33.3%,#a4a4a4 66.6%,rgba(0,0,0,0.15) 66.6%)"></div>
<div style="left:0.00px;top:710.40px;width:2122.70px;height:3.00px;background:linear-gradient(rgba(0,0,0,0.075) 33.3%,#a4a4a4 33.3%,#a4a4a4 66.6%,rgba(0,0,0,0.15) 66.6%)"></div>
<div style="left:0.00px;top:738.40px;width:2122.70px;height:3.00px;background:linear-gradient(rgba(0,0,0,0.075) 33.3%,#a4a4a4 33.3%,#a4a4a4 66.6%,rgba(0,0,0,0.15) 66.6%)"></div>
<div style="left:0.00px;top:767.40px;width:2122.70px;height:3.00px;background:linear-gradient(rgba(0,0,0,0.075) 33.3%,#a4a4a4 33.3%,#a4a4a4 66.6%,rgba(0,0,0,0.15) 66.6%)"></div>
<div style="left:0.00px;top:795.40px;width:2122.70px;height:3.00px;background:linear-gradient(rgba(0,0,0,0.075) 33.3%,#a4a4a4 33.3%,#a4a4a4 66.6%,rgba(0,0,0,0.15) 66.6%)"></div>
<div style="left:0.00px;top:824.40px;width:2122.70px;height:3.00px;background:linear-gradient(rgba(0,0,0,0.075) 33.3%,#a4a4a4 33.3%,#a4a4a4 66.6%,rgba(0,0,0,0.15) 66.6%)"></div>
<div style="left:0.00px;top:852.40px;width:2122.70px;height:3.00px;background:linear-gradient(rgba(0,0,0,0.075) 33.3%,#a4a4a4 33.3%,#a4a4a4 66.6%,rgba(0,0,0,0.15) 66.6%)"></div>
<div style="left:0.00px;top:881.40px;width:2122.70px;height:3.00px;background:linear-gradient(rgba(0,0,0,0.075) 33.3%,#a4a4a4 33.3%,#a4a4a4 66.6%,rgba(0,0,0,0.15) 66.6%)"></div>
<div style="left:0.00px;top:909.40px;width:2122.70px;height:3.00px;background:linear-gradient(rgba(0,0,0,0.075) 33.3%,#a4a4a4 33.3%,#a4a4a4 66.6%,rgba(0,0,0,0.15) 66.6%)"></div>
<div style="left:0.00px;top:938.40px;width:2122.70px;height:3.00px;background:linear-gradient(rgba(0,0,0,0.075) 33.3%,#a4a4a4 33.3%,#a4a4a4 66.6%,rgba(0,0,0,0.15) 66.6%)"></div>
<div style="left:0.00px;top:966.40px;width:2122.70px;height:3.00px;background:linear-gradient(rgba(0,0,0,0.075) 33.3%,#a4a4a4 33.3%,#a4a4a4 66.6%,rgba(0,0,0,0.15) 66.6%)"></div>
<div style="left:0.00px;top:995.40px;width:2122.70px;height:3.00px;background:linear-gradient(rgba(0,0,0,0.075) 33.3%,#a4a4a4 33.3%,#a4a4a4 66.6%,rgba(0,0,0,0.15) 66.6%)"></div>
<div style="left:0.00px;top:1023.40px;width:2122.70px;height:3.00px;background:linear-gradient(rgba(0,0,0,0.075) 33.3%,#a4a4a4 33.3%,#a4a4a4 66.6%,rgba(0,0,0,0.15) 66.6%)"></div>
<div style="left:17.00px;top:0.00px;width:1.00px;height:1014.40px;background:#a4a4a4"></div>
<div style="left:71.00px;top:0.00px;width:1.00px;height:1014.40px;background:#a4a4a4"></div>
<div style="left:180.00px;top:0.00px;width:1.00px;height:1014.40px;background:#a4a4a4"></div>
<div style="left:320.00px;top:0.00px;width:1.00px;height:1014.40px;background:#a4a4a4"></div>
<div style="left:456.00px;top:0.00px;width:1.00px;height:1014.40px;background:#a4a4a4"></div>
<div style="left:663.00px;top:0.00px;width:1.00px;height:1014.40px;background:#a4a4a4"></div>
<div style="left:791.00px;top:0.00px;width:1.00px;height:1014.40px;background:#a4a4a4"></div>
<div style="left:929.00px;top:0.00px;width:1.00px;height:1014.40px;background:#a4a4a4"></div>
<div style="left:1083.00px;top:0.00px;width:1.00px;height:1014.40px;background:#a4a4a4"></div>
<div style="left:1233.00px;top:0.00px;width:1.00px;height:1014.40px;background:#a4a4a4"></div>
<div style="left:1368.00px;top:0.00px;width:1.00px;height:1014.40px;background:#a4a4a4"></div>
<div style="left:1482.00px;top:0.00px;width:1.00px;height:1014.40px;background:#a4a4a4"></div>
<div style="left:1676.00px;top:0.00px;width:1.00px;height:1014.40px;background:#a4a4a4"></div>
<div style="left:1812.00px;top:0.00px;width:1.00px;height:1014.40px;background:#a4a4a4"></div>
<div style="left:1908.00px;top:0.00px;width:1.00px;height:1014.40px;background:#a4a4a4"></div>
<div style="left:2049.00px;top:0.00px;width:1.00px;height:1014.40px;background:#a4a4a4"></div>
<div style="left:18.00px;top:342.40px;width:646.00px;height:1.50px;background:repeating-linear-gradient(90deg,#e8923e 0 1px,rgba(232,146,62,.45) 1px 2px,transparent 2px 3px)"></div>
<div style="left:665.00px;top:342.40px;width:126.00px;height:1.50px;background:repeating-linear-gradient(90deg,#2a2a2a 0 1px,rgba(42,42,42,.45) 1px 2px,transparent 2px 3px)"></div>
<div style="left:792.00px;top:342.40px;width:1330.70px;height:1.50px;background:repeating-linear-gradient(90deg,#e8923e 0 1px,rgba(232,146,62,.45) 1px 2px,transparent 2px 3px)"></div>
<div style="left:18.00px;top:368.40px;width:646.00px;height:1.50px;background:repeating-linear-gradient(90deg,#e8923e 0 1px,rgba(232,146,62,.45) 1px 2px,transparent 2px 3px)"></div>
<div style="left:665.00px;top:368.40px;width:126.00px;height:1.50px;background:repeating-linear-gradient(90deg,#2a2a2a 0 1px,rgba(42,42,42,.45) 1px 2px,transparent 2px 3px)"></div>
<div style="left:792.00px;top:368.40px;width:1330.70px;height:1.50px;background:repeating-linear-gradient(90deg,#e8923e 0 1px,rgba(232,146,62,.45) 1px 2px,transparent 2px 3px)"></div>
</div>
<div style="left:2134.70px;top:204.00px;width:26.80px;height:1043.00px;background:#f0f0f0"></div>
<div style="left:2134.70px;top:204.00px;width:1.30px;height:1043.00px;background:#fafafa"></div>
<div style="left:2160.00px;top:204.00px;width:2.20px;height:1075.00px;background:#fff"></div>
<svg style="left:2140px;top:212px" width="15" height="10" viewBox="0 0 15 10"><path d="M2 8.5 L7.5 3 L13 8.5" fill="none" stroke="#555" stroke-width="2.6"/></svg>
<div style="left:2136.40px;top:229.50px;width:21.90px;height:24.10px;background:#cdcdcd"></div>
<svg style="left:2140px;top:1229px" width="15" height="10" viewBox="0 0 15 10"><path d="M2 1.5 L7.5 7 L13 1.5" fill="none" stroke="#555" stroke-width="2.6"/></svg>
<div style="left:6.00px;top:1247.00px;width:132.00px;height:27.60px;background:#fff"></div>
<div style="left:138.00px;top:1247.90px;width:2023.50px;height:26.70px;background:#f0f0f0"></div>
<div style="left:13.90px;top:1248.90px;width:23.10px;height:24.40px;background:#e1e1e1;border:1px solid #adadad;box-sizing:border-box"></div>
<div style="left:138.50px;top:1248.90px;width:23.10px;height:24.40px;background:#e1e1e1;border:1px solid #adadad;box-sizing:border-box"></div>
<div style="left:165.30px;top:1248.90px;width:23.50px;height:24.40px;background:#e1e1e1;border:1px solid #adadad;box-sizing:border-box"></div>
<svg style="left:18px;top:1255px" width="14" height="12" viewBox="0 0 14 12"><path d="M1 1h2v10h-2z M13 1 L7 6 L13 11Z M8 1 L2.5 6 L8 11Z" fill="#222"/></svg>
<svg style="left:142px;top:1255px" width="14" height="12" viewBox="0 0 14 12"><path d="M11 1h2v10h-2z M1 1 L7 6 L1 11Z M6 1 L11.5 6 L6 11Z" fill="#222"/></svg>
<svg style="left:170px;top:1255px" width="13" height="12" viewBox="0 0 13 12"><path d="M1 1 H12 V4.5 L8.5 6.5 V11.2 H4.5 V6.5 L1 4.5Z" fill="#f07c10"/><path d="M2.5 2.6 H10.5" stroke="#ffd8a8" stroke-width="1"/></svg>
<div class="t" style="left:47.97px;top:1250.86px;height:22.4px;line-height:22.4px;font-size:16px;transform:scaleX(1.0100);transform-origin:0 0;color:#000">13 из 1943</div>
<svg style="left:272px;top:1255px" width="11" height="13" viewBox="0 0 11 13"><path d="M8.5 1.5 L3.2 6.5 L8.5 11.5" fill="none" stroke="#555" stroke-width="2.8"/></svg>
<div style="left:290.90px;top:1248.40px;width:1370.90px;height:25.40px;background:#cdcdcd"></div>
<svg style="left:2117px;top:1255px" width="11" height="13" viewBox="0 0 11 13"><path d="M2.5 1.5 L7.8 6.5 L2.5 11.5" fill="none" stroke="#555" stroke-width="2.8"/></svg>
<div style="left:10.70px;top:1284.20px;width:187.00px;height:34.30px;background:#f0f0f0;border:1.8px solid #1e1e1e;box-sizing:border-box"></div>
<div class="t" style="left:14.35px;top:1289.44px;height:22.82px;line-height:22.82px;font-size:16.3px;transform:scaleX(1.0079);transform-origin:0 0;color:#000">Головна</div>
<div style="left:201.00px;top:1284.20px;width:187.00px;height:34.30px;background:#fed4a8;border:1.8px solid #2a7ad4;box-sizing:border-box"></div>
<div class="t" style="left:204.45px;top:1289.44px;height:22.82px;line-height:22.82px;font-size:16.3px;transform:scaleX(1.0314);transform-origin:0 0;color:#000">Замовлення від поку ...</div>
<div style="left:693.00px;top:595.00px;width:518.00px;height:291.00px;background:#f1f1f1;border:1px solid #a0a0a0;box-shadow:inset 0 0 0 1px #fafafa;box-sizing:border-box"></div>
<div style="left:695.00px;top:630.40px;width:512.60px;height:34.80px;background:#91c9f7;border:4.1px solid #ff0000;box-sizing:border-box;border-radius:2.5px"></div>
<div class="t" style="left:744.07px;top:603.65px;height:25.48px;line-height:25.48px;font-size:18.2px;transform:scaleX(0.9672);transform-origin:0 0;color:#8c8c8c">Додати</div>
<div class="t" style="left:743.04px;top:637.05px;height:25.48px;line-height:25.48px;font-size:18.2px;font-weight:bold;transform:scaleX(0.9508);transform-origin:0 0;color:#000">Редагувати</div>
<div class="t" style="left:742.75px;top:669.85px;height:25.48px;line-height:25.48px;font-size:18.2px;transform:scaleX(0.9712);transform-origin:0 0;color:#8c8c8c">Видалити рядок</div>
<div class="t" style="left:743.30px;top:711.95px;height:25.48px;line-height:25.48px;font-size:18.2px;transform:scaleX(0.9765);transform-origin:0 0;color:#000">Скасувати замовлення</div>
<div class="t" style="left:742.72px;top:753.85px;height:25.48px;line-height:25.48px;font-size:18.2px;transform:scaleX(0.9929);transform-origin:0 0;color:#000">Відкрийте чек</div>
<div class="t" style="left:742.73px;top:787.15px;height:25.48px;line-height:25.48px;font-size:18.2px;transform:scaleX(0.9816);transform-origin:0 0;color:#000">Відкрити відкладений чек</div>
<div class="t" style="left:742.74px;top:819.35px;height:25.48px;line-height:25.48px;font-size:18.2px;transform:scaleX(0.9769);transform-origin:0 0;color:#8c8c8c">Відкрийте замовлення для постачальника</div>
<div class="t" style="left:742.72px;top:852.65px;height:25.48px;line-height:25.48px;font-size:18.2px;transform:scaleX(0.9935);transform-origin:0 0;color:#8c8c8c">Відкрийте комбіноване замовлення постачальнику</div>
<div class="t" style="left:1151.86px;top:603.85px;height:25.48px;line-height:25.48px;font-size:18.2px;transform:scaleX(0.9761);transform-origin:0 0;color:#8c8c8c">Ins</div>
<div class="t" style="left:1155.11px;top:636.45px;height:25.48px;line-height:25.48px;font-size:18.2px;font-weight:bold;transform:scaleX(0.8991);transform-origin:0 0;color:#000">F4</div>
<div class="t" style="left:1149.28px;top:669.45px;height:25.48px;line-height:25.48px;font-size:18.2px;transform:scaleX(0.9520);transform-origin:0 0;color:#8c8c8c">Del</div>
<div style="left:741.40px;top:702.00px;width:464.40px;height:1.20px;background:#d7d7d7"></div>
<div style="left:741.40px;top:743.80px;width:464.40px;height:1.20px;background:#d7d7d7"></div>
<svg style="left:702px;top:604.5px" width="23" height="23" viewBox="0 0 23 23"><path d="M8.5 1.5h6v7h7v6h-7v7h-6v-7h-7v-6h7z" fill="#b5dfa8" stroke="#a3d095" stroke-width="1"/></svg>
<svg style="left:701px;top:636px" width="26" height="26" viewBox="0 0 26 26"><path d="M20.5 1.8 L24.2 5.5 L7 22.7 L3.3 19 Z" fill="#9fb060" stroke="#c8d8a8" stroke-width="1"/><path d="M20.5 1.8 L24.2 5.5 L22.5 7.2 L18.8 3.5Z" fill="#5a86c0"/><path d="M22 1.5 L24.5 4 L25 3 C25.2 2.4 24.6 1.2 23.8 1 Z" fill="#b07090"/><path d="M3.3 19 L7 22.7 L1.2 24.8 Z" fill="#d8d8e8" stroke="#5a86c0" stroke-width="0.8"/></svg>
<svg style="left:702px;top:671px" width="23" height="23" viewBox="0 0 23 23"><path d="M3 3 L20 20 M20 3 L3 20" stroke="#f0aaa0" stroke-width="4.5" stroke-linecap="round"/></svg>
<svg style="left:702px;top:712px" width="23" height="23" viewBox="0 0 23 23"><circle cx="11.5" cy="11.5" r="8.8" fill="none" stroke="#e8502c" stroke-width="4"/><path d="M5.5 17.5 L17.5 5.5" stroke="#e8502c" stroke-width="4"/></svg>
<svg style="left:702px;top:756px;opacity:1" width="23" height="20" viewBox="0 0 23 20"><rect x="0.8" y="0.8" width="21.4" height="18.4" fill="#fff" stroke="#5a86c8" stroke-width="1.4"/><rect x="0.8" y="0.8" width="21.4" height="4" fill="#5a86c8"/><path d="M4 8h4M10 8h4M16 8h3M4 11.5h4M10 11.5h4M16 11.5h3M4 15h4M10 15h4M16 15h3" stroke="#8aa0c0" stroke-width="1.6"/></svg>
<svg style="left:702px;top:789px;opacity:1" width="23" height="20" viewBox="0 0 23 20"><rect x="0.8" y="0.8" width="21.4" height="18.4" fill="#fff" stroke="#5a86c8" stroke-width="1.4"/><rect x="0.8" y="0.8" width="21.4" height="4" fill="#5a86c8"/><path d="M4 8h4M10 8h4M16 8h3M4 11.5h4M10 11.5h4M16 11.5h3M4 15h4M10 15h4M16 15h3" stroke="#8aa0c0" stroke-width="1.6"/></svg>
<svg style="left:702px;top:822px;opacity:0.35" width="23" height="20" viewBox="0 0 23 20"><rect x="0.8" y="0.8" width="21.4" height="18.4" fill="#fff" stroke="#5a86c8" stroke-width="1.4"/><rect x="0.8" y="0.8" width="21.4" height="4" fill="#5a86c8"/><path d="M4 8h4M10 8h4M16 8h3M4 11.5h4M10 11.5h4M16 11.5h3M4 15h4M10 15h4M16 15h3" stroke="#8aa0c0" stroke-width="1.6"/></svg>
<svg style="left:702px;top:855px;opacity:0.35" width="23" height="20" viewBox="0 0 23 20"><rect x="0.8" y="0.8" width="21.4" height="18.4" fill="#fff" stroke="#5a86c8" stroke-width="1.4"/><rect x="0.8" y="0.8" width="21.4" height="4" fill="#5a86c8"/><path d="M4 8h4M10 8h4M16 8h3M4 11.5h4M10 11.5h4M16 11.5h3M4 15h4M10 15h4M16 15h3" stroke="#8aa0c0" stroke-width="1.6"/></svg>
<svg style="left:0;top:0" width="2165" height="1321" viewBox="0 0 2165 1321"><path d="M521.0 594.6 L685.3 639.5 L687.2 634.6 L699.6 646.5 L682.0 650.3 L683.7 644.7 L520.6 595.8 Z" fill="#f00" stroke="#f00" stroke-width="1.2" stroke-linejoin="round"/></svg>
<div style="left:4.00px;top:36.20px;width:120.60px;height:37.00px;border:4.2px solid #ff0000;box-sizing:border-box;border-radius:2px"></div>
<div style="left:0.00px;top:0.00px;width:4.00px;height:1321.00px;background:#000"></div>
<div style="left:4.00px;top:73.20px;width:2.00px;height:1247.80px;background:#000"></div>
<div style="left:4.00px;top:0.00px;width:2.00px;height:36.20px;background:#000"></div>
</body></html>
